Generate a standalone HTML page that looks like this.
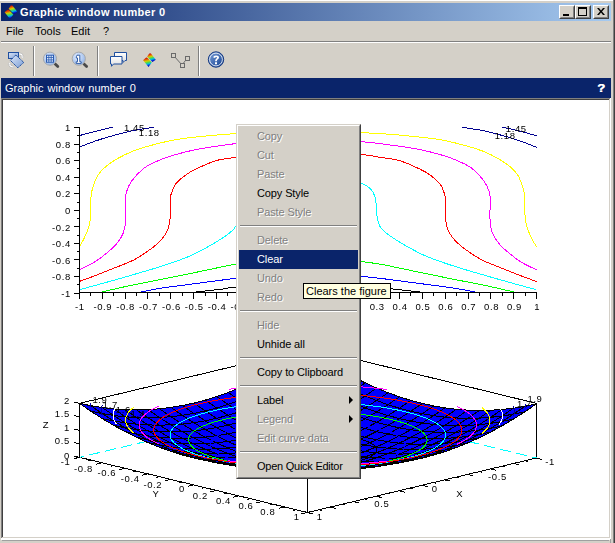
<!DOCTYPE html>
<html><head><meta charset="utf-8">
<style>
*{margin:0;padding:0;box-sizing:border-box}
html,body{width:615px;height:543px;overflow:hidden;background:#d4d0c8;font-family:"Liberation Sans",sans-serif;font-size:11px;color:#000}
.a{position:absolute}
#title{left:1px;top:3px;width:610px;height:18px;background:linear-gradient(to right,#0a246a,#a6caf0)}
#ttext{left:19px;top:2px;color:#fff;font-weight:bold;font-size:11px;line-height:14px;letter-spacing:0.35px;white-space:nowrap}
.btn{top:2px;width:16px;height:14px;background:#d4d0c8;border-style:solid;border-width:1px;border-color:#fff #404040 #404040 #fff}
.btn i{position:absolute;left:0;top:0;right:0;bottom:0;border-style:solid;border-width:1px;border-color:#d4d0c8 #808080 #808080 #d4d0c8}
.mb{top:21px;height:20px;line-height:20px;white-space:nowrap}
.menu{left:236px;top:124px;width:125px;height:355px;border:1px solid;border-color:#d4d0c8 #404040 #404040 #d4d0c8;background:#d4d0c8}
.menu>.in{position:absolute;left:0;top:0;right:0;bottom:0;border:1px solid;border-color:#fff #808080 #808080 #fff;padding:1px}
.it{position:relative;height:19px;line-height:19px;padding-left:18px;letter-spacing:-0.12px;white-space:nowrap}
.dis{color:#808080;text-shadow:1px 1px 0 #fff}
.hl{background:#0a246a;color:#fff}
.sep{position:relative;height:9px}
.sep:before{content:"";position:absolute;left:1px;right:1px;top:3px;height:1px;background:#808080}
.sep:after{content:"";position:absolute;left:1px;right:1px;top:4px;height:1px;background:#fff}
.arr{position:absolute;left:110px;top:5px;width:0;height:0;border-style:solid;border-width:4px 0 4px 4px;border-color:transparent transparent transparent #000}
</style></head><body>
<div class="a" style="left:0;top:0;width:614px;height:1px;background:#fff"></div>
<div class="a" style="left:613px;top:0;width:1px;height:543px;background:#808080"></div>
<div class="a" style="left:614px;top:0;width:1px;height:543px;background:#404040"></div>

<div id="title" class="a">
<svg class="a" style="left:0;top:0" width="20" height="18" viewBox="1 3 20 18">
<defs>
<linearGradient id="g1" gradientUnits="userSpaceOnUse" x1="11.6" y1="5.3" x2="14" y2="13.6"><stop offset="0" stop-color="#c00000"/><stop offset=".18" stop-color="#e85000"/><stop offset=".38" stop-color="#d0d000"/><stop offset=".55" stop-color="#50d850"/><stop offset=".72" stop-color="#00c0e0"/><stop offset=".9" stop-color="#0020e0"/><stop offset="1" stop-color="#0000b0"/></linearGradient>
<linearGradient id="g2" gradientUnits="userSpaceOnUse" x1="8" y1="9.6" x2="10" y2="18.6"><stop offset="0" stop-color="#c00000"/><stop offset=".18" stop-color="#e85000"/><stop offset=".38" stop-color="#d0d000"/><stop offset=".55" stop-color="#50d850"/><stop offset=".72" stop-color="#00c0e0"/><stop offset=".9" stop-color="#0020e0"/><stop offset="1" stop-color="#0000b0"/></linearGradient>
</defs>
<path d="M10.4 5.9Q11.6 4.4 12.8 5.9L17.3 11.8L14 14.1L8.6 8.7z" fill="url(#g1)"/>
<path d="M6.8 10.2Q8 8.8 9.3 10.2L13.3 14.5L10 19L4.6 12.3z" fill="url(#g2)"/>
</svg>
<div id="ttext" class="a">Graphic window number 0</div>
<div class="a btn" style="left:558px"><i></i><div class="a" style="left:3px;top:8px;width:6px;height:2px;background:#000"></div></div>
<div class="a btn" style="left:574px"><i></i><div class="a" style="left:2px;top:1px;width:9px;height:9px;border:1px solid #000;border-top-width:2px"></div></div>
<div class="a btn" style="left:592px"><i></i>
<svg class="a" style="left:3px;top:2px" width="8" height="7" viewBox="0 0 8 7"><path d="M0 0h2l2 2.5 2-2.5h2L5 3.5 8 7H6L4 4.5 2 7H0l3-3.5z" fill="#000"/></svg></div>
</div>

<div class="a mb" style="left:6px">File</div>
<div class="a mb" style="left:35px">Tools</div>
<div class="a mb" style="left:71px">Edit</div>
<div class="a mb" style="left:103px">?</div>
<div class="a" style="left:1px;top:41px;width:610px;height:1px;background:#808080"></div>
<div class="a" style="left:1px;top:42px;width:610px;height:1px;background:#fff"></div>

<!-- toolbar separators -->
<div class="a" style="left:33px;top:46px;width:1px;height:30px;background:#808080"></div>
<div class="a" style="left:34px;top:46px;width:1px;height:30px;background:#fff"></div>
<div class="a" style="left:97px;top:46px;width:1px;height:30px;background:#808080"></div>
<div class="a" style="left:98px;top:46px;width:1px;height:30px;background:#fff"></div>
<div class="a" style="left:198px;top:46px;width:1px;height:30px;background:#808080"></div>
<div class="a" style="left:199px;top:46px;width:1px;height:30px;background:#fff"></div>

<!-- toolbar icons -->
<svg class="a" style="left:0;top:43px;will-change:transform" width="240" height="35" viewBox="0 43 240 35">
<defs>
<linearGradient id="lb" x1="0" y1="0" x2="1" y2="1"><stop offset="0" stop-color="#dbe6f7"/><stop offset="1" stop-color="#7d9fd6"/></linearGradient>
<linearGradient id="hb" x1="0" y1="0" x2="1" y2="1"><stop offset="0" stop-color="#7fa3dc"/><stop offset="1" stop-color="#0e3c8c"/></linearGradient>
<radialGradient id="mg" cx=".4" cy=".35" r=".7"><stop offset="0" stop-color="#e6efff"/><stop offset="1" stop-color="#8fb2e6"/></radialGradient>
<linearGradient id="wb" x1="0" y1="0" x2="0" y2="1"><stop offset="0" stop-color="#ffffff"/><stop offset="1" stop-color="#dcdcdc"/></linearGradient>
</defs>
<!-- icon1 -->
<path d="M19 53.8Q22.3 53.8 22.3 56.6M13.5 67Q9.6 67 9.6 63.8" stroke="#b8b8b8" stroke-width="2.4" fill="none"/><path d="M19 53.8Q22.3 53.8 22.3 56.6M13.5 67Q9.6 67 9.6 63.8" stroke="#fff" stroke-width="1.2" fill="none"/><polygon points="20.6,56.2 24,56.2 22.3,58.4" fill="#fff" stroke="#b8b8b8" stroke-width=".5"/><polygon points="8,64.2 11.2,64.2 9.6,62" fill="#fff" stroke="#b8b8b8" stroke-width=".5"/>
<rect x="8.5" y="52.5" width="10" height="6" fill="url(#lb)" stroke="#1f4f9f"/>
<polygon points="15.8,55 23.8,62.4 17.8,67.8 10.4,60.4" fill="url(#lb)" stroke="#1a4a9a" stroke-width="1" stroke-dasharray="1.5,.6"/>
<!-- magnifier 1 -->
<line x1="55.2" y1="64" x2="57.8" y2="66.6" stroke="#4a4a4a" stroke-width="2.8" stroke-linecap="round"/>
<circle cx="50" cy="58.7" r="6.6" fill="url(#mg)" stroke="#a8a8a8" stroke-width="1"/>
<rect x="46.5" y="55.2" width="7" height="7" fill="#dce8fa" stroke="#2a5ab0" stroke-width="1"/><path d="M48.8 55.2v7M51.2 55.2v7M46.5 57.5h7M46.5 59.9h7" stroke="#2a5ab0" stroke-width=".8"/>
<!-- magnifier 2 -->
<line x1="84" y1="64" x2="86.6" y2="66.6" stroke="#4a4a4a" stroke-width="2.8" stroke-linecap="round"/>
<circle cx="78.8" cy="58.7" r="6.6" fill="url(#mg)" stroke="#a8a8a8" stroke-width="1"/>
<path d="M77 55.2h2.8v6.6h1.4v1.6h-5v-1.6h1.3v-3.8h-1.2v-1.2z" fill="#fff" stroke="#1f4f9f" stroke-width=".9"/>
<!-- bubbles -->
<path d="M114.5 52.5h12v8h-1.5l-2 2v-2h-8.5z" fill="url(#wb)" stroke="#1f4f9f"/>
<path d="M110.5 56.5h11.5v7.5h-8.5l-2 2.3v-2.3h-1z" fill="url(#wb)" stroke="#1f4f9f"/>
<!-- scilab -->
<g transform="translate(138.5,48)"><path d="M10.4 5.9Q11.6 4.4 12.8 5.9L17.3 11.8L14 14.1L8.6 8.7z" fill="url(#g1)"/>
<path d="M6.8 10.2Q8 8.8 9.3 10.2L13.3 14.5L10 19L4.6 12.3z" fill="url(#g2)"/></g>
<!-- nodes -->
<path d="M174 56L182 65L187 58.5" stroke="#6a6a6a" stroke-width="1" fill="none"/>
<rect x="171.5" y="53.5" width="4" height="4" fill="#d4d0c8" stroke="#6a6a6a"/>
<rect x="180.5" y="63.5" width="4" height="4" fill="#d4d0c8" stroke="#6a6a6a"/>
<rect x="185.5" y="56.5" width="4" height="4" fill="#d4d0c8" stroke="#6a6a6a"/>
<!-- help -->
<circle cx="216" cy="59.5" r="7.7" fill="url(#hb)" stroke="#173a80" stroke-width="1"/>
<circle cx="216" cy="59.5" r="6.4" fill="none" stroke="#fff" stroke-width=".8"/>
<path d="M213.3 57.6Q213.3 55.4 216.1 55.4Q219 55.4 219 57.5Q219 58.8 217.3 59.7Q216.9 60 216.9 61.2H215.1Q215.1 59.4 216.2 58.7Q217.1 58.1 217.1 57.6Q217.1 56.9 216.1 56.9Q215.2 56.9 215.1 57.9z M215 62.2h2v2h-2z" fill="#fff"/>
</svg>

<!-- docked title -->
<div class="a" style="left:1px;top:78px;width:610px;height:20px;background:#0a246a"></div>
<div class="a" style="left:5px;top:78px;height:20px;line-height:20px;color:#fff;font-size:11px;word-spacing:1px;white-space:nowrap">Graphic window number 0</div>
<div class="a" style="left:597px;top:78px;height:20px;line-height:20px;color:#fff;font-size:11px;font-weight:bold;transform:scaleX(1.2);transform-origin:0 0;text-shadow:0.4px 0 0 #fff">?</div>

<!-- canvas border -->
<div class="a" style="left:1px;top:98px;width:610px;height:1px;background:#808080"></div>
<div class="a" style="left:1px;top:98px;width:1px;height:440px;background:#808080"></div>
<div class="a" style="left:2px;top:99px;width:608px;height:1px;background:#404040"></div>
<div class="a" style="left:2px;top:99px;width:1px;height:438px;background:#404040"></div>
<div class="a" style="left:3px;top:100px;width:606px;height:437px;background:#fff"></div>
<div class="a" style="left:609px;top:99px;width:1px;height:439px;background:#d4d0c8"></div>
<div class="a" style="left:2px;top:537px;width:608px;height:1px;background:#d4d0c8"></div>
<div class="a" style="left:610px;top:98px;width:1px;height:441px;background:#fff"></div>
<div class="a" style="left:1px;top:538px;width:609px;height:2px;background:#fff"></div>
<div class="a" style="left:2px;top:540px;width:607px;height:1px;background:#a0a0a0"></div>
<div class="a" style="left:610px;top:539px;width:1px;height:4px;background:#a0a0a0"></div>

<svg width="606" height="437" viewBox="3 100 606 437" style="position:absolute;left:3px;top:100px;will-change:transform" shape-rendering="crispEdges">
<g font-family="Liberation Sans, sans-serif" font-size="9.5" letter-spacing="0.6" fill="#000">
<svg x="79" y="127" width="459" height="166" viewBox="79 127 459 166" overflow="hidden"><g><path fill="none" stroke="#00008f" d="M79 135.7C81.83 134.95 90.32 132.63 96 131.2C101.68 129.77 110.25 127.78 113.1 127.1"/><path fill="none" stroke="#00008f" d="M79 147.3C81.83 146.22 90.33 142.75 96 140.8C101.67 138.85 106.83 137.3 113 135.6C119.17 133.9 126.2 131.98 133 130.6C139.8 129.22 150.33 127.85 153.8 127.3"/><path fill="none" stroke="#ffff00" d="M79 247C79.67 245.92 81.75 242.83 83 240.5C84.25 238.17 85.5 235.42 86.5 233C87.5 230.58 88.33 228.5 89 226C89.67 223.5 90.2 221 90.5 218C90.8 215 90.75 211 90.8 208C90.85 205 90.68 202.5 90.8 200C90.92 197.5 91.1 195.28 91.5 193C91.9 190.72 92.08 189.35 93.2 186.3C94.32 183.25 95.72 178.3 98.2 174.7C100.68 171.1 103.68 168.02 108.1 164.7C112.52 161.38 119.17 157.55 124.7 154.8C130.23 152.05 133.02 150.68 141.3 148.2C149.58 145.72 163.37 141.95 174.4 139.9C185.43 137.85 197.23 136.95 207.5 135.9C217.77 134.85 227.25 134.17 236 133.6C244.75 133.03 248 132.8 260 132.5C272 132.2 300 131.92 308 131.8"/><path fill="none" stroke="#ff00ff" d="M79 269.8C81.4 268.63 88.85 265.53 93.4 262.8C97.95 260.07 102.47 256.53 106.3 253.4C110.13 250.27 113.57 247.4 116.4 244C119.23 240.6 121.77 236.83 123.3 233C124.83 229.17 125.22 226.5 125.6 221C125.98 215.5 125.47 204.83 125.6 200C125.73 195.17 125.38 195.17 126.4 192C127.42 188.83 128.77 184.97 131.7 181C134.63 177.03 139.62 171.57 144 168.2C148.38 164.83 153.33 162.9 158 160.8C162.67 158.7 165.63 157.48 172 155.6C178.37 153.72 187.53 151.23 196.2 149.5C204.87 147.77 214.27 146.5 224 145.2C233.73 143.9 240.6 142.48 254.6 141.7C268.6 140.92 299.1 140.7 308 140.5"/><path fill="none" stroke="#ff0000" d="M79 281.6C81.83 280.55 90.53 277.4 96 275.3C101.47 273.2 105.48 271.57 111.8 269C118.12 266.43 127.15 263.42 133.9 259.9C140.65 256.38 147.78 251.22 152.3 247.9C156.82 244.58 158.8 242.32 161 240C163.2 237.68 164.25 236.07 165.5 234C166.75 231.93 167.7 230.5 168.5 227.6C169.3 224.7 169.98 221.2 170.3 216.6C170.62 212 170.28 203.67 170.4 200C170.52 196.33 170.2 197.17 171 194.6C171.8 192.03 172.87 187.78 175.2 184.6C177.53 181.42 181.53 178.1 185 175.5C188.47 172.9 190.78 171.48 196 169C201.22 166.52 209.63 162.55 216.3 160.6C222.97 158.65 229.62 158.3 236 157.3C242.38 156.3 242.6 155.32 254.6 154.6C266.6 153.88 299.1 153.27 308 153"/><path fill="none" stroke="#00ffff" d="M79.5 289.7C86.25 287.83 106.48 282.37 120 278.5C133.52 274.63 148.93 270.25 160.6 266.5C172.27 262.75 181.43 259.67 190 256C198.57 252.33 205.42 248.33 212 244.5C218.58 240.67 225.5 236.08 229.5 233C233.5 229.92 234.42 229.17 236 226C237.58 222.83 238.42 217.5 239 214C239.58 210.5 239.17 208 239.5 205C239.83 202 240.08 198.67 241 196C241.92 193.33 242.73 191.17 245 189C247.27 186.83 249.6 185.33 254.6 183C259.6 180.67 271.6 176.33 275 175"/><path fill="none" stroke="#00ff00" d="M101.7 292C106.42 290.93 119.47 287.82 130 285.6C140.53 283.38 153.23 281.05 164.9 278.7C176.57 276.35 188.15 273.93 200 271.5C211.85 269.07 226 265.85 236 264.1C246 262.35 248 262.02 260 261C272 259.98 300 258.5 308 258"/><path fill="none" stroke="#0000ff" d="M141 292C144.58 291.33 152.67 289.5 162.5 288C172.33 286.5 187.75 284.62 200 283C212.25 281.38 226 279.47 236 278.3C246 277.13 248 276.88 260 276C272 275.12 300 273.5 308 273"/><path fill="none" stroke="#000000" d="M196 292C200.67 291.48 217.33 289.68 224 288.9C230.67 288.12 222 288.12 236 287.3C250 286.48 296 284.55 308 284"/></g><g transform="translate(615.7,0) scale(-1,1)"><path fill="none" stroke="#00008f" d="M79 135.7C81.83 134.95 90.32 132.63 96 131.2C101.68 129.77 110.25 127.78 113.1 127.1"/><path fill="none" stroke="#00008f" d="M79 147.3C81.83 146.22 90.33 142.75 96 140.8C101.67 138.85 106.83 137.3 113 135.6C119.17 133.9 126.2 131.98 133 130.6C139.8 129.22 150.33 127.85 153.8 127.3"/><path fill="none" stroke="#ffff00" d="M79 247C79.67 245.92 81.75 242.83 83 240.5C84.25 238.17 85.5 235.42 86.5 233C87.5 230.58 88.33 228.5 89 226C89.67 223.5 90.2 221 90.5 218C90.8 215 90.75 211 90.8 208C90.85 205 90.68 202.5 90.8 200C90.92 197.5 91.1 195.28 91.5 193C91.9 190.72 92.08 189.35 93.2 186.3C94.32 183.25 95.72 178.3 98.2 174.7C100.68 171.1 103.68 168.02 108.1 164.7C112.52 161.38 119.17 157.55 124.7 154.8C130.23 152.05 133.02 150.68 141.3 148.2C149.58 145.72 163.37 141.95 174.4 139.9C185.43 137.85 197.23 136.95 207.5 135.9C217.77 134.85 227.25 134.17 236 133.6C244.75 133.03 248 132.8 260 132.5C272 132.2 300 131.92 308 131.8"/><path fill="none" stroke="#ff00ff" d="M79 269.8C81.4 268.63 88.85 265.53 93.4 262.8C97.95 260.07 102.47 256.53 106.3 253.4C110.13 250.27 113.57 247.4 116.4 244C119.23 240.6 121.77 236.83 123.3 233C124.83 229.17 125.22 226.5 125.6 221C125.98 215.5 125.47 204.83 125.6 200C125.73 195.17 125.38 195.17 126.4 192C127.42 188.83 128.77 184.97 131.7 181C134.63 177.03 139.62 171.57 144 168.2C148.38 164.83 153.33 162.9 158 160.8C162.67 158.7 165.63 157.48 172 155.6C178.37 153.72 187.53 151.23 196.2 149.5C204.87 147.77 214.27 146.5 224 145.2C233.73 143.9 240.6 142.48 254.6 141.7C268.6 140.92 299.1 140.7 308 140.5"/><path fill="none" stroke="#ff0000" d="M79 281.6C81.83 280.55 90.53 277.4 96 275.3C101.47 273.2 105.48 271.57 111.8 269C118.12 266.43 127.15 263.42 133.9 259.9C140.65 256.38 147.78 251.22 152.3 247.9C156.82 244.58 158.8 242.32 161 240C163.2 237.68 164.25 236.07 165.5 234C166.75 231.93 167.7 230.5 168.5 227.6C169.3 224.7 169.98 221.2 170.3 216.6C170.62 212 170.28 203.67 170.4 200C170.52 196.33 170.2 197.17 171 194.6C171.8 192.03 172.87 187.78 175.2 184.6C177.53 181.42 181.53 178.1 185 175.5C188.47 172.9 190.78 171.48 196 169C201.22 166.52 209.63 162.55 216.3 160.6C222.97 158.65 229.62 158.3 236 157.3C242.38 156.3 242.6 155.32 254.6 154.6C266.6 153.88 299.1 153.27 308 153"/><path fill="none" stroke="#00ffff" d="M79.5 289.7C86.25 287.83 106.48 282.37 120 278.5C133.52 274.63 148.93 270.25 160.6 266.5C172.27 262.75 181.43 259.67 190 256C198.57 252.33 205.42 248.33 212 244.5C218.58 240.67 225.5 236.08 229.5 233C233.5 229.92 234.42 229.17 236 226C237.58 222.83 238.42 217.5 239 214C239.58 210.5 239.17 208 239.5 205C239.83 202 240.08 198.67 241 196C241.92 193.33 242.73 191.17 245 189C247.27 186.83 249.6 185.33 254.6 183C259.6 180.67 271.6 176.33 275 175"/><path fill="none" stroke="#00ff00" d="M101.7 292C106.42 290.93 119.47 287.82 130 285.6C140.53 283.38 153.23 281.05 164.9 278.7C176.57 276.35 188.15 273.93 200 271.5C211.85 269.07 226 265.85 236 264.1C246 262.35 248 262.02 260 261C272 259.98 300 258.5 308 258"/><path fill="none" stroke="#0000ff" d="M141 292C144.58 291.33 152.67 289.5 162.5 288C172.33 286.5 187.75 284.62 200 283C212.25 281.38 226 279.47 236 278.3C246 277.13 248 276.88 260 276C272 275.12 300 273.5 308 273"/><path fill="none" stroke="#000000" d="M196 292C200.67 291.48 217.33 289.68 224 288.9C230.67 288.12 222 288.12 236 287.3C250 286.48 296 284.55 308 284"/></g></svg>
<path d="M79 292.5H537 M79.5 292.5V127.5" stroke="#000" fill="none"/><path d="M79.5 292.5V298.5" stroke="#000"/><text x="79.9" y="309.5" text-anchor="middle">-1</text><path d="M90.5 292.5V295.5" stroke="#000"/><path d="M102.5 292.5V298.5" stroke="#000"/><text x="102.8" y="309.5" text-anchor="middle">-0.9</text><path d="M113.5 292.5V295.5" stroke="#000"/><path d="M125.5 292.5V298.5" stroke="#000"/><text x="125.6" y="309.5" text-anchor="middle">-0.8</text><path d="M136.5 292.5V295.5" stroke="#000"/><path d="M147.5 292.5V298.5" stroke="#000"/><text x="148.5" y="309.5" text-anchor="middle">-0.7</text><path d="M159.5 292.5V295.5" stroke="#000"/><path d="M170.5 292.5V298.5" stroke="#000"/><text x="171.4" y="309.5" text-anchor="middle">-0.6</text><path d="M182.5 292.5V295.5" stroke="#000"/><path d="M193.5 292.5V298.5" stroke="#000"/><text x="194.2" y="309.5" text-anchor="middle">-0.5</text><path d="M205.5 292.5V295.5" stroke="#000"/><path d="M216.5 292.5V298.5" stroke="#000"/><text x="217.1" y="309.5" text-anchor="middle">-0.4</text><path d="M227.5 292.5V295.5" stroke="#000"/><path d="M239.5 292.5V298.5" stroke="#000"/><text x="240.0" y="309.5" text-anchor="middle">-0.3</text><path d="M250.5 292.5V295.5" stroke="#000"/><path d="M262.5 292.5V298.5" stroke="#000"/><text x="262.9" y="309.5" text-anchor="middle">-0.2</text><path d="M273.5 292.5V295.5" stroke="#000"/><path d="M285.5 292.5V298.5" stroke="#000"/><text x="285.7" y="309.5" text-anchor="middle">-0.1</text><path d="M296.5 292.5V295.5" stroke="#000"/><path d="M308.5 292.5V298.5" stroke="#000"/><text x="308.6" y="309.5" text-anchor="middle">0</text><path d="M319.5 292.5V295.5" stroke="#000"/><path d="M330.5 292.5V298.5" stroke="#000"/><text x="331.5" y="309.5" text-anchor="middle">0.1</text><path d="M342.5 292.5V295.5" stroke="#000"/><path d="M353.5 292.5V298.5" stroke="#000"/><text x="354.3" y="309.5" text-anchor="middle">0.2</text><path d="M365.5 292.5V295.5" stroke="#000"/><path d="M376.5 292.5V298.5" stroke="#000"/><text x="377.2" y="309.5" text-anchor="middle">0.3</text><path d="M388.5 292.5V295.5" stroke="#000"/><path d="M399.5 292.5V298.5" stroke="#000"/><text x="400.1" y="309.5" text-anchor="middle">0.4</text><path d="M410.5 292.5V295.5" stroke="#000"/><path d="M422.5 292.5V298.5" stroke="#000"/><text x="422.9" y="309.5" text-anchor="middle">0.5</text><path d="M433.5 292.5V295.5" stroke="#000"/><path d="M445.5 292.5V298.5" stroke="#000"/><text x="445.8" y="309.5" text-anchor="middle">0.6</text><path d="M456.5 292.5V295.5" stroke="#000"/><path d="M468.5 292.5V298.5" stroke="#000"/><text x="468.7" y="309.5" text-anchor="middle">0.7</text><path d="M479.5 292.5V295.5" stroke="#000"/><path d="M490.5 292.5V298.5" stroke="#000"/><text x="491.6" y="309.5" text-anchor="middle">0.8</text><path d="M502.5 292.5V295.5" stroke="#000"/><path d="M513.5 292.5V298.5" stroke="#000"/><text x="514.4" y="309.5" text-anchor="middle">0.9</text><path d="M525.5 292.5V295.5" stroke="#000"/><path d="M536.5 292.5V298.5" stroke="#000"/><text x="537.3" y="309.5" text-anchor="middle">1</text><path d="M79.5 293.5H73.5" stroke="#000"/><text x="70.8" y="296.7" text-anchor="end">-1</text><path d="M79.5 284.5H76.5" stroke="#000"/><path d="M79.5 276.5H73.5" stroke="#000"/><text x="70.8" y="280.2" text-anchor="end">-0.8</text><path d="M79.5 268.5H76.5" stroke="#000"/><path d="M79.5 259.5H73.5" stroke="#000"/><text x="70.8" y="263.6" text-anchor="end">-0.6</text><path d="M79.5 251.5H76.5" stroke="#000"/><path d="M79.5 243.5H73.5" stroke="#000"/><text x="70.8" y="247.0" text-anchor="end">-0.4</text><path d="M79.5 235.5H76.5" stroke="#000"/><path d="M79.5 226.5H73.5" stroke="#000"/><text x="70.8" y="230.5" text-anchor="end">-0.2</text><path d="M79.5 218.5H76.5" stroke="#000"/><path d="M79.5 210.5H73.5" stroke="#000"/><text x="70.8" y="213.9" text-anchor="end">0</text><path d="M79.5 202.5H76.5" stroke="#000"/><path d="M79.5 193.5H73.5" stroke="#000"/><text x="70.8" y="197.4" text-anchor="end">0.2</text><path d="M79.5 185.5H76.5" stroke="#000"/><path d="M79.5 177.5H73.5" stroke="#000"/><text x="70.8" y="180.8" text-anchor="end">0.4</text><path d="M79.5 168.5H76.5" stroke="#000"/><path d="M79.5 160.5H73.5" stroke="#000"/><text x="70.8" y="164.3" text-anchor="end">0.6</text><path d="M79.5 152.5H76.5" stroke="#000"/><path d="M79.5 144.5H73.5" stroke="#000"/><text x="70.8" y="147.7" text-anchor="end">0.8</text><path d="M79.5 135.5H76.5" stroke="#000"/><path d="M79.5 127.5H73.5" stroke="#000"/><text x="70.8" y="131.2" text-anchor="end">1</text>
<text x="123.9" y="130.8">1.45</text><text x="138.8" y="136">1.18</text>
<text x="505.8" y="132">1.45</text><text x="494.7" y="139.4">1.18</text>
<polyline fill="none" stroke="#000" points="79.5,403.4 309.8,348.0 536.5,403.4"/><path d="M79.5 403.4V457.5 M536.5 403.4V458.3 M307.5 458V512.5" stroke="#000" fill="none"/><polyline fill="none" stroke="#000" points="79.5,457.3 307.5,512.5 536.5,458.0"/><path fill="none" stroke="#00ffff" stroke-dasharray="11.2,5.2" stroke-dashoffset="6.8" d="M79.5 457.3L308.3 402.8M536.5 458.0L308.3 402.8"/>
<g fill="#0000ff" stroke="#000" stroke-width="1" stroke-linejoin="round"><polygon points="308.3,348.8 296.86,356.65 308.25,364.54 319.69,356.69"/><polygon points="319.69,356.69 308.25,364.54 319.64,371.89 331.09,364.04"/><polygon points="296.86,356.65 285.41,363.97 296.81,371.86 308.25,364.54"/><polygon points="308.25,364.54 296.81,371.86 308.2,379.21 319.64,371.89"/><polygon points="331.09,364.04 319.64,371.89 331.04,378.7 342.49,370.85"/><polygon points="285.41,363.97 273.97,370.74 285.36,378.63 296.81,371.86"/><polygon points="319.64,371.89 308.2,379.21 319.6,386.02 331.04,378.7"/><polygon points="296.81,371.86 285.36,378.63 296.75,385.99 308.2,379.21"/><polygon points="342.49,370.85 331.04,378.7 342.44,384.98 353.88,377.12"/><polygon points="273.97,370.74 262.52,376.98 273.92,384.87 285.36,378.63"/><polygon points="353.88,377.12 342.44,384.98 353.83,390.7 365.27,382.85"/><polygon points="331.04,378.7 319.6,386.02 330.99,392.29 342.44,384.98"/><polygon points="308.2,379.21 296.75,385.99 308.15,392.8 319.6,386.02"/><polygon points="285.36,378.63 273.92,384.87 285.31,392.22 296.75,385.99"/><polygon points="262.52,376.98 251.08,382.67 262.47,390.56 273.92,384.87"/><polygon points="342.44,384.98 330.99,392.29 342.38,398.02 353.83,390.7"/><polygon points="273.92,384.87 262.47,390.56 273.87,397.91 285.31,392.22"/><polygon points="365.27,382.85 353.83,390.7 365.23,395.89 376.67,388.04"/><polygon points="319.6,386.02 308.15,392.8 319.55,399.06 330.99,392.29"/><polygon points="296.75,385.99 285.31,392.22 296.71,399.03 308.15,392.8"/><polygon points="251.08,382.67 239.63,387.83 251.03,395.72 262.47,390.56"/><polygon points="376.67,388.04 365.23,395.89 376.62,400.55 388.06,392.69"/><polygon points="353.83,390.7 342.38,398.02 353.78,403.21 365.23,395.89"/><polygon points="330.99,392.29 319.55,399.06 330.94,404.79 342.38,398.02"/><polygon points="285.31,392.22 273.87,397.91 285.26,404.72 296.71,399.03"/><polygon points="262.47,390.56 251.03,395.72 262.42,403.07 273.87,397.91"/><polygon points="239.63,387.83 228.19,392.44 239.58,400.33 251.03,395.72"/><polygon points="308.15,392.8 296.71,399.03 308.1,405.3 319.55,399.06"/><polygon points="365.23,395.89 353.78,403.21 365.18,407.86 376.62,400.55"/><polygon points="251.03,395.72 239.58,400.33 250.97,407.69 262.42,403.07"/><polygon points="388.06,392.69 376.62,400.55 388.01,404.66 399.46,396.8"/><polygon points="342.38,398.02 330.94,404.79 342.34,409.98 353.78,403.21"/><polygon points="319.55,399.06 308.1,405.3 319.5,411.03 330.94,404.79"/><polygon points="296.71,399.03 285.26,404.72 296.66,411 308.1,405.3"/><polygon points="273.87,397.91 262.42,403.07 273.82,409.88 285.26,404.72"/><polygon points="228.19,392.44 216.74,396.52 228.13,404.41 239.58,400.33"/><polygon points="376.62,400.55 365.18,407.86 376.57,411.97 388.01,404.66"/><polygon points="353.78,403.21 342.34,409.98 353.73,414.63 365.18,407.86"/><polygon points="308.1,405.3 296.66,411 308.05,416.72 319.5,411.03"/><polygon points="262.42,403.07 250.97,407.69 262.37,414.49 273.82,409.88"/><polygon points="239.58,400.33 228.13,404.41 239.53,411.76 250.97,407.69"/><polygon points="399.46,396.8 388.01,404.66 399.41,408.23 410.86,400.37"/><polygon points="330.94,404.79 319.5,411.03 330.89,416.22 342.34,409.98"/><polygon points="285.26,404.72 273.82,409.88 285.21,416.15 296.66,411"/><polygon points="216.74,396.52 205.3,400.05 216.69,407.94 228.13,404.41"/><polygon points="410.86,400.37 399.41,408.23 410.81,411.25 422.25,403.4"/><polygon points="388.01,404.66 376.57,411.97 387.97,415.54 399.41,408.23"/><polygon points="365.18,407.86 353.73,414.63 365.12,418.75 376.57,411.97"/><polygon points="342.34,409.98 330.89,416.22 342.29,420.87 353.73,414.63"/><polygon points="319.5,411.03 308.05,416.72 319.45,421.91 330.89,416.22"/><polygon points="296.66,411 285.21,416.15 296.61,421.88 308.05,416.72"/><polygon points="273.82,409.88 262.37,414.49 273.76,420.76 285.21,416.15"/><polygon points="250.97,407.69 239.53,411.76 250.93,418.57 262.37,414.49"/><polygon points="228.13,404.41 216.69,407.94 228.08,415.29 239.53,411.76"/><polygon points="205.3,400.05 193.85,403.05 205.25,410.94 216.69,407.94"/><polygon points="399.41,408.23 387.97,415.54 399.36,418.57 410.81,411.25"/><polygon points="330.89,416.22 319.45,421.91 330.84,426.56 342.29,420.87"/><polygon points="285.21,416.15 273.76,420.76 285.16,426.49 296.61,421.88"/><polygon points="216.69,407.94 205.25,410.94 216.64,418.29 228.08,415.29"/><polygon points="308.05,416.72 296.61,421.88 308,427.07 319.45,421.91"/><polygon points="422.25,403.4 410.81,411.25 422.2,413.75 433.64,405.89"/><polygon points="376.57,411.97 365.12,418.75 376.52,422.31 387.97,415.54"/><polygon points="353.73,414.63 342.29,420.87 353.68,424.98 365.12,418.75"/><polygon points="262.37,414.49 250.93,418.57 262.32,424.84 273.76,420.76"/><polygon points="239.53,411.76 228.08,415.29 239.48,422.1 250.93,418.57"/><polygon points="193.85,403.05 182.41,405.5 193.8,413.39 205.25,410.94"/><polygon points="410.81,411.25 399.36,418.57 410.75,421.06 422.2,413.75"/><polygon points="387.97,415.54 376.52,422.31 387.92,425.34 399.36,418.57"/><polygon points="342.29,420.87 330.84,426.56 342.24,430.68 353.68,424.98"/><polygon points="319.45,421.91 308,427.07 319.4,431.72 330.84,426.56"/><polygon points="296.61,421.88 285.16,426.49 296.56,431.68 308,427.07"/><polygon points="273.76,420.76 262.32,424.84 273.71,430.57 285.16,426.49"/><polygon points="228.08,415.29 216.64,418.29 228.04,425.1 239.48,422.1"/><polygon points="205.25,410.94 193.8,413.39 205.19,420.75 216.64,418.29"/><polygon points="433.64,405.89 422.2,413.75 433.6,415.69 445.04,407.84"/><polygon points="182.41,405.5 170.96,407.42 182.36,415.31 193.8,413.39"/><polygon points="365.12,418.75 353.68,424.98 365.08,428.55 376.52,422.31"/><polygon points="250.93,418.57 239.48,422.1 250.88,428.37 262.32,424.84"/><polygon points="422.2,413.75 410.75,421.06 422.15,423.01 433.6,415.69"/><polygon points="308,427.07 296.56,431.68 307.95,436.33 319.4,431.72"/><polygon points="193.8,413.39 182.36,415.31 193.75,422.66 205.19,420.75"/><polygon points="445.04,407.84 433.6,415.69 444.99,417.1 456.44,409.25"/><polygon points="399.36,418.57 387.92,425.34 399.31,427.83 410.75,421.06"/><polygon points="376.52,422.31 365.08,428.55 376.47,431.58 387.92,425.34"/><polygon points="353.68,424.98 342.24,430.68 353.63,434.25 365.08,428.55"/><polygon points="330.84,426.56 319.4,431.72 330.79,435.83 342.24,430.68"/><polygon points="285.16,426.49 273.71,430.57 285.11,435.76 296.56,431.68"/><polygon points="262.32,424.84 250.88,428.37 262.27,434.1 273.71,430.57"/><polygon points="239.48,422.1 228.04,425.1 239.43,431.37 250.88,428.37"/><polygon points="216.64,418.29 205.19,420.75 216.59,427.56 228.04,425.1"/><polygon points="170.96,407.42 159.52,408.79 170.91,416.69 182.36,415.31"/><polygon points="433.6,415.69 422.15,423.01 433.55,424.42 444.99,417.1"/><polygon points="365.08,428.55 353.63,434.25 365.03,437.27 376.47,431.58"/><polygon points="319.4,431.72 307.95,436.33 319.34,440.44 330.79,435.83"/><polygon points="296.56,431.68 285.11,435.76 296.5,440.41 307.95,436.33"/><polygon points="250.88,428.37 239.43,431.37 250.83,437.1 262.27,434.1"/><polygon points="182.36,415.31 170.91,416.69 182.31,424.04 193.75,422.66"/><polygon points="456.44,409.25 444.99,417.1 456.38,417.98 467.83,410.12"/><polygon points="410.75,421.06 399.31,427.83 410.71,429.78 422.15,423.01"/><polygon points="342.24,430.68 330.79,435.83 342.19,439.4 353.63,434.25"/><polygon points="273.71,430.57 262.27,434.1 273.67,439.29 285.11,435.76"/><polygon points="205.19,420.75 193.75,422.66 205.15,429.47 216.59,427.56"/><polygon points="159.52,408.79 148.07,409.63 159.47,417.52 170.91,416.69"/><polygon points="387.92,425.34 376.47,431.58 387.87,434.07 399.31,427.83"/><polygon points="228.04,425.1 216.59,427.56 227.99,433.82 239.43,431.37"/><polygon points="444.99,417.1 433.55,424.42 444.94,425.29 456.38,417.98"/><polygon points="170.91,416.69 159.47,417.52 170.86,424.87 182.31,424.04"/><polygon points="467.83,410.12 456.38,417.98 467.78,418.31 479.23,410.45"/><polygon points="422.15,423.01 410.71,429.78 422.1,431.19 433.55,424.42"/><polygon points="376.47,431.58 365.03,437.27 376.42,439.76 387.87,434.07"/><polygon points="353.63,434.25 342.19,439.4 353.58,442.43 365.03,437.27"/><polygon points="330.79,435.83 319.34,440.44 330.74,444.01 342.19,439.4"/><polygon points="307.95,436.33 296.5,440.41 307.9,444.52 319.34,440.44"/><polygon points="285.11,435.76 273.67,439.29 285.06,443.94 296.5,440.41"/><polygon points="262.27,434.1 250.83,437.1 262.22,442.29 273.67,439.29"/><polygon points="239.43,431.37 227.99,433.82 239.38,439.56 250.83,437.1"/><polygon points="193.75,422.66 182.31,424.04 193.7,430.84 205.15,429.47"/><polygon points="148.07,409.63 136.62,409.92 148.02,417.81 159.47,417.52"/><polygon points="399.31,427.83 387.87,434.07 399.26,436.02 410.71,429.78"/><polygon points="216.59,427.56 205.15,429.47 216.54,435.74 227.99,433.82"/><polygon points="456.38,417.98 444.94,425.29 456.34,425.62 467.78,418.31"/><polygon points="159.47,417.52 148.02,417.81 159.42,425.16 170.86,424.87"/><polygon points="433.55,424.42 422.1,431.19 433.5,432.06 444.94,425.29"/><polygon points="387.87,434.07 376.42,439.76 387.82,441.71 399.26,436.02"/><polygon points="342.19,439.4 330.74,444.01 342.13,447.04 353.58,442.43"/><polygon points="273.67,439.29 262.22,442.29 273.62,446.94 285.06,443.94"/><polygon points="227.99,433.82 216.54,435.74 227.94,441.47 239.38,439.56"/><polygon points="182.31,424.04 170.86,424.87 182.26,431.68 193.7,430.84"/><polygon points="365.03,437.27 353.58,442.43 364.98,444.92 376.42,439.76"/><polygon points="319.34,440.44 307.9,444.52 319.3,448.09 330.74,444.01"/><polygon points="296.5,440.41 285.06,443.94 296.45,448.05 307.9,444.52"/><polygon points="250.83,437.1 239.38,439.56 250.78,444.75 262.22,442.29"/><polygon points="479.23,410.45 467.78,418.31 479.18,418.1 490.62,410.24"/><polygon points="410.71,429.78 399.26,436.02 410.66,437.43 422.1,431.19"/><polygon points="205.15,429.47 193.7,430.84 205.1,437.12 216.54,435.74"/><polygon points="136.62,409.92 125.18,409.68 136.57,417.57 148.02,417.81"/><polygon points="467.78,418.31 456.34,425.62 467.73,425.41 479.18,418.1"/><polygon points="444.94,425.29 433.5,432.06 444.89,432.39 456.34,425.62"/><polygon points="399.26,436.02 387.82,441.71 399.21,443.12 410.66,437.43"/><polygon points="216.54,435.74 205.1,437.12 216.49,442.84 227.94,441.47"/><polygon points="170.86,424.87 159.42,425.16 170.81,431.97 182.26,431.68"/><polygon points="148.02,417.81 136.57,417.57 147.97,424.92 159.42,425.16"/><polygon points="376.42,439.76 364.98,444.92 376.37,446.87 387.82,441.71"/><polygon points="353.58,442.43 342.13,447.04 353.53,449.53 364.98,444.92"/><polygon points="330.74,444.01 319.3,448.09 330.69,451.12 342.13,447.04"/><polygon points="285.06,443.94 273.62,446.94 285.01,451.05 296.45,448.05"/><polygon points="262.22,442.29 250.78,444.75 262.17,449.4 273.62,446.94"/><polygon points="239.38,439.56 227.94,441.47 239.33,446.66 250.78,444.75"/><polygon points="490.62,410.24 479.18,418.1 490.57,417.34 502.01,409.49"/><polygon points="422.1,431.19 410.66,437.43 422.05,438.3 433.5,432.06"/><polygon points="307.9,444.52 296.45,448.05 307.85,451.62 319.3,448.09"/><polygon points="193.7,430.84 182.26,431.68 193.65,437.95 205.1,437.12"/><polygon points="125.18,409.68 113.73,408.89 125.13,416.78 136.57,417.57"/><polygon points="479.18,418.1 467.73,425.41 479.12,424.66 490.57,417.34"/><polygon points="410.66,437.43 399.21,443.12 410.61,444 422.05,438.3"/><polygon points="205.1,437.12 193.65,437.95 205.05,443.68 216.49,442.84"/><polygon points="136.57,417.57 125.13,416.78 136.52,424.13 147.97,424.92"/><polygon points="387.82,441.71 376.37,446.87 387.77,448.28 399.21,443.12"/><polygon points="364.98,444.92 353.53,449.53 364.93,451.48 376.37,446.87"/><polygon points="250.78,444.75 239.33,446.66 250.73,451.31 262.17,449.4"/><polygon points="227.94,441.47 216.49,442.84 227.89,448.03 239.33,446.66"/><text x="102.8" y="408.3" fill="#000" stroke="none">1.7</text><text x="517.0" y="406.8" fill="#000" stroke="none">1.7</text><polygon points="502.01,409.49 490.57,417.34 501.97,416.05 513.41,408.2"/><polygon points="456.34,425.62 444.89,432.39 456.29,432.19 467.73,425.41"/><polygon points="433.5,432.06 422.05,438.3 433.45,438.63 444.89,432.39"/><polygon points="342.13,447.04 330.69,451.12 342.09,453.61 353.53,449.53"/><polygon points="319.3,448.09 307.85,451.62 319.25,454.65 330.69,451.12"/><polygon points="296.45,448.05 285.01,451.05 296.41,454.62 307.85,451.62"/><polygon points="273.62,446.94 262.17,449.4 273.56,453.5 285.01,451.05"/><polygon points="182.26,431.68 170.81,431.97 182.21,438.25 193.65,437.95"/><polygon points="159.42,425.16 147.97,424.92 159.37,431.73 170.81,431.97"/><polygon points="113.73,408.89 102.29,407.57 113.69,415.46 125.13,416.78"/><polygon points="490.57,417.34 479.12,424.66 490.52,423.37 501.97,416.05"/><polygon points="422.05,438.3 410.61,444 422,444.32 433.45,438.63"/><polygon points="193.65,437.95 182.21,438.25 193.6,443.97 205.05,443.68"/><polygon points="125.13,416.78 113.69,415.46 125.08,422.81 136.52,424.13"/><polygon points="399.21,443.12 387.77,448.28 399.16,449.15 410.61,444"/><polygon points="376.37,446.87 364.93,451.48 376.32,452.89 387.77,448.28"/><polygon points="239.33,446.66 227.89,448.03 239.28,452.68 250.73,451.31"/><polygon points="216.49,442.84 205.05,443.68 216.44,448.87 227.89,448.03"/><polygon points="513.41,408.2 501.97,416.05 513.36,414.22 524.8,406.37"/><polygon points="467.73,425.41 456.29,432.19 467.68,431.44 479.12,424.66"/><polygon points="353.53,449.53 342.09,453.61 353.48,455.56 364.93,451.48"/><polygon points="307.85,451.62 296.41,454.62 307.8,457.65 319.25,454.65"/><polygon points="262.17,449.4 250.73,451.31 262.12,455.42 273.56,453.5"/><polygon points="147.97,424.92 136.52,424.13 147.92,430.94 159.37,431.73"/><polygon points="102.29,407.57 90.85,405.7 102.24,413.59 113.69,415.46"/><polygon points="330.69,451.12 319.25,454.65 330.64,457.14 342.09,453.61"/><polygon points="285.01,451.05 273.56,453.5 284.96,457.07 296.41,454.62"/><polygon points="444.89,432.39 433.45,438.63 444.84,438.42 456.29,432.19"/><polygon points="170.81,431.97 159.37,431.73 170.76,438 182.21,438.25"/><text x="92.4" y="403.0" fill="#000" stroke="none">1.9</text><text x="527.5" y="402.4" fill="#000" stroke="none">1.9</text><polygon points="501.97,416.05 490.52,423.37 501.92,421.54 513.36,414.22"/><polygon points="113.69,415.46 102.24,413.59 113.64,420.94 125.08,422.81"/><polygon points="410.61,444 399.16,449.15 410.56,449.48 422,444.32"/><polygon points="387.77,448.28 376.32,452.89 387.71,453.76 399.16,449.15"/><polygon points="227.89,448.03 216.44,448.87 227.84,453.52 239.28,452.68"/><polygon points="205.05,443.68 193.6,443.97 205,449.16 216.44,448.87"/><polygon points="524.8,406.37 513.36,414.22 524.75,411.86 536.2,404"/><polygon points="479.12,424.66 467.68,431.44 479.08,430.14 490.52,423.37"/><polygon points="433.45,438.63 422,444.32 433.4,444.11 444.84,438.42"/><polygon points="364.93,451.48 353.48,455.56 364.88,456.97 376.32,452.89"/><polygon points="250.73,451.31 239.28,452.68 250.68,456.8 262.12,455.42"/><polygon points="182.21,438.25 170.76,438 182.16,443.73 193.6,443.97"/><polygon points="136.52,424.13 125.08,422.81 136.48,429.62 147.92,430.94"/><polygon points="90.85,405.7 79.4,403.3 90.8,411.19 102.24,413.59"/><polygon points="342.09,453.61 330.64,457.14 342.04,459.09 353.48,455.56"/><polygon points="319.25,454.65 307.8,457.65 319.2,460.14 330.64,457.14"/><polygon points="296.41,454.62 284.96,457.07 296.36,460.11 307.8,457.65"/><polygon points="273.56,453.5 262.12,455.42 273.52,458.99 284.96,457.07"/><polygon points="456.29,432.19 444.84,438.42 456.24,437.67 467.68,431.44"/><polygon points="159.37,431.73 147.92,430.94 159.31,437.21 170.76,438"/><polygon points="513.36,414.22 501.92,421.54 513.31,419.17 524.75,411.86"/><polygon points="102.24,413.59 90.8,411.19 102.19,418.54 113.64,420.94"/><polygon points="399.16,449.15 387.71,453.76 399.11,454.09 410.56,449.48"/><polygon points="216.44,448.87 205,449.16 216.39,453.81 227.84,453.52"/><polygon points="490.52,423.37 479.08,430.14 490.47,428.31 501.92,421.54"/><polygon points="444.84,438.42 433.4,444.11 444.79,443.36 456.24,437.67"/><polygon points="376.32,452.89 364.88,456.97 376.27,457.84 387.71,453.76"/><polygon points="239.28,452.68 227.84,453.52 239.23,457.63 250.68,456.8"/><polygon points="170.76,438 159.31,437.21 170.71,442.94 182.16,443.73"/><polygon points="125.08,422.81 113.64,420.94 125.03,427.75 136.48,429.62"/><text x="115.8" y="412.8" fill="#000" stroke="none">1.6</text><text x="130.5" y="417.2" fill="#000" stroke="none">1.4</text><polygon points="422,444.32 410.56,449.48 421.95,449.27 433.4,444.11"/><polygon points="353.48,455.56 342.04,459.09 353.43,460.5 364.88,456.97"/><polygon points="330.64,457.14 319.2,460.14 330.59,462.09 342.04,459.09"/><polygon points="284.96,457.07 273.52,458.99 284.91,462.02 296.36,460.11"/><polygon points="262.12,455.42 250.68,456.8 262.07,460.37 273.52,458.99"/><polygon points="193.6,443.97 182.16,443.73 193.55,448.92 205,449.16"/><polygon points="467.68,431.44 456.24,437.67 467.63,436.38 479.08,430.14"/><polygon points="307.8,457.65 296.36,460.11 307.75,462.59 319.2,460.14"/><polygon points="147.92,430.94 136.48,429.62 147.87,435.89 159.31,437.21"/><polygon points="501.92,421.54 490.47,428.31 501.87,425.94 513.31,419.17"/><polygon points="456.24,437.67 444.79,443.36 456.19,442.07 467.63,436.38"/><polygon points="387.71,453.76 376.27,457.84 387.67,458.17 399.11,454.09"/><polygon points="227.84,453.52 216.39,453.81 227.79,457.93 239.23,457.63"/><polygon points="159.31,437.21 147.87,435.89 159.27,441.62 170.71,442.94"/><polygon points="113.64,420.94 102.19,418.54 113.59,425.35 125.03,427.75"/><polygon points="433.4,444.11 421.95,449.27 433.35,448.52 444.79,443.36"/><polygon points="410.56,449.48 399.11,454.09 410.5,453.88 421.95,449.27"/><polygon points="364.88,456.97 353.43,460.5 364.82,461.38 376.27,457.84"/><polygon points="342.04,459.09 330.59,462.09 341.99,463.5 353.43,460.5"/><polygon points="273.52,458.99 262.07,460.37 273.47,463.39 284.91,462.02"/><polygon points="250.68,456.8 239.23,457.63 250.63,461.2 262.07,460.37"/><polygon points="205,449.16 193.55,448.92 204.94,453.57 216.39,453.81"/><polygon points="182.16,443.73 170.71,442.94 182.1,448.13 193.55,448.92"/><polygon points="479.08,430.14 467.63,436.38 479.03,434.55 490.47,428.31"/><polygon points="319.2,460.14 307.75,462.59 319.15,464.54 330.59,462.09"/><polygon points="296.36,460.11 284.91,462.02 296.31,464.51 307.75,462.59"/><polygon points="136.48,429.62 125.03,427.75 136.43,434.02 147.87,435.89"/><polygon points="467.63,436.38 456.19,442.07 467.58,440.24 479.03,434.55"/><polygon points="147.87,435.89 136.43,434.02 147.82,439.75 159.27,441.62"/><polygon points="444.79,443.36 433.35,448.52 444.74,447.23 456.19,442.07"/><polygon points="421.95,449.27 410.5,453.88 421.9,453.13 433.35,448.52"/><polygon points="376.27,457.84 364.82,461.38 376.22,461.7 387.67,458.17"/><polygon points="353.43,460.5 341.99,463.5 353.38,464.37 364.82,461.38"/><polygon points="262.07,460.37 250.63,461.2 262.02,464.23 273.47,463.39"/><polygon points="239.23,457.63 227.79,457.93 239.18,461.5 250.63,461.2"/><polygon points="193.55,448.92 182.1,448.13 193.5,452.78 204.94,453.57"/><polygon points="170.71,442.94 159.27,441.62 170.66,446.81 182.1,448.13"/><polygon points="490.47,428.31 479.03,434.55 490.42,432.18 501.87,425.94"/><polygon points="399.11,454.09 387.67,458.17 399.06,457.96 410.5,453.88"/><polygon points="330.59,462.09 319.15,464.54 330.54,465.95 341.99,463.5"/><polygon points="307.75,462.59 296.31,464.51 307.7,466.46 319.15,464.54"/><polygon points="284.91,462.02 273.47,463.39 284.86,465.88 296.31,464.51"/><polygon points="216.39,453.81 204.94,453.57 216.34,457.68 227.79,457.93"/><polygon points="125.03,427.75 113.59,425.35 124.98,431.62 136.43,434.02"/><polygon points="479.03,434.55 467.58,440.24 478.98,437.88 490.42,432.18"/><polygon points="136.43,434.02 124.98,431.62 136.38,437.35 147.82,439.75"/><polygon points="456.19,442.07 444.74,447.23 456.14,445.4 467.58,440.24"/><polygon points="433.35,448.52 421.9,453.13 433.3,451.84 444.74,447.23"/><polygon points="364.82,461.38 353.38,464.37 364.78,464.7 376.22,461.7"/><polygon points="250.63,461.2 239.18,461.5 250.58,464.52 262.02,464.23"/><polygon points="182.1,448.13 170.66,446.81 182.06,451.46 193.5,452.78"/><polygon points="159.27,441.62 147.82,439.75 159.22,444.94 170.66,446.81"/><polygon points="410.5,453.88 399.06,457.96 410.45,457.21 421.9,453.13"/><polygon points="341.99,463.5 330.54,465.95 341.94,466.83 353.38,464.37"/><polygon points="319.15,464.54 307.7,466.46 319.1,467.87 330.54,465.95"/><polygon points="296.31,464.51 284.86,465.88 296.26,467.83 307.7,466.46"/><polygon points="273.47,463.39 262.02,464.23 273.42,466.72 284.86,465.88"/><polygon points="204.94,453.57 193.5,452.78 204.9,456.89 216.34,457.68"/><polygon points="387.67,458.17 376.22,461.7 387.62,461.49 399.06,457.96"/><polygon points="227.79,457.93 216.34,457.68 227.73,461.25 239.18,461.5"/><polygon points="467.58,440.24 456.14,445.4 467.53,443.03 478.98,437.88"/><polygon points="444.74,447.23 433.3,451.84 444.69,450.01 456.14,445.4"/><polygon points="170.66,446.81 159.22,444.94 170.61,449.59 182.06,451.46"/><polygon points="147.82,439.75 136.38,437.35 147.77,442.54 159.22,444.94"/><polygon points="421.9,453.13 410.45,457.21 421.85,455.92 433.3,451.84"/><polygon points="399.06,457.96 387.62,461.49 399.01,460.74 410.45,457.21"/><polygon points="376.22,461.7 364.78,464.7 376.17,464.49 387.62,461.49"/><polygon points="353.38,464.37 341.94,466.83 353.33,467.16 364.78,464.7"/><polygon points="330.54,465.95 319.1,467.87 330.49,468.74 341.94,466.83"/><polygon points="307.7,466.46 296.26,467.83 307.65,469.25 319.1,467.87"/><polygon points="284.86,465.88 273.42,466.72 284.81,468.67 296.26,467.83"/><polygon points="262.02,464.23 250.58,464.52 261.97,467.01 273.42,466.72"/><polygon points="239.18,461.5 227.73,461.25 239.13,464.28 250.58,464.52"/><polygon points="216.34,457.68 204.9,456.89 216.29,460.46 227.73,461.25"/><polygon points="193.5,452.78 182.06,451.46 193.45,455.57 204.9,456.89"/><polygon points="456.14,445.4 444.69,450.01 456.08,447.64 467.53,443.03"/><polygon points="159.22,444.94 147.77,442.54 159.17,447.19 170.61,449.59"/><polygon points="433.3,451.84 421.85,455.92 433.25,454.09 444.69,450.01"/><polygon points="341.94,466.83 330.49,468.74 341.89,469.07 353.33,467.16"/><polygon points="319.1,467.87 307.65,469.25 319.05,470.12 330.49,468.74"/><polygon points="296.26,467.83 284.81,468.67 296.21,470.08 307.65,469.25"/><polygon points="273.42,466.72 261.97,467.01 273.37,468.96 284.81,468.67"/><polygon points="182.06,451.46 170.61,449.59 182.01,453.7 193.45,455.57"/><polygon points="410.45,457.21 399.01,460.74 410.41,459.45 421.85,455.92"/><polygon points="387.62,461.49 376.17,464.49 387.56,463.74 399.01,460.74"/><polygon points="364.78,464.7 353.33,467.16 364.73,466.94 376.17,464.49"/><polygon points="250.58,464.52 239.13,464.28 250.53,466.77 261.97,467.01"/><polygon points="227.73,461.25 216.29,460.46 227.69,463.49 239.13,464.28"/><polygon points="204.9,456.89 193.45,455.57 204.84,459.14 216.29,460.46"/><polygon points="444.69,450.01 433.25,454.09 444.64,451.72 456.08,447.64"/><polygon points="421.85,455.92 410.41,459.45 421.8,457.62 433.25,454.09"/><polygon points="399.01,460.74 387.56,463.74 398.96,462.45 410.41,459.45"/><polygon points="330.49,468.74 319.05,470.12 330.44,470.44 341.89,469.07"/><polygon points="307.65,469.25 296.21,470.08 307.6,470.95 319.05,470.12"/><polygon points="284.81,468.67 273.37,468.96 284.76,470.37 296.21,470.08"/><polygon points="216.29,460.46 204.84,459.14 216.24,462.17 227.69,463.49"/><polygon points="193.45,455.57 182.01,453.7 193.4,457.27 204.84,459.14"/><polygon points="170.61,449.59 159.17,447.19 170.56,451.3 182.01,453.7"/><polygon points="376.17,464.49 364.73,466.94 376.12,466.19 387.56,463.74"/><polygon points="353.33,467.16 341.89,469.07 353.28,468.86 364.73,466.94"/><polygon points="261.97,467.01 250.53,466.77 261.92,468.72 273.37,468.96"/><polygon points="239.13,464.28 227.69,463.49 239.08,465.98 250.53,466.77"/><polygon points="319.05,470.12 307.6,470.95 319,471.28 330.44,470.44"/><polygon points="296.21,470.08 284.76,470.37 296.16,471.25 307.6,470.95"/><polygon points="433.25,454.09 421.8,457.62 433.19,455.25 444.64,451.72"/><polygon points="410.41,459.45 398.96,462.45 410.36,460.62 421.8,457.62"/><polygon points="387.56,463.74 376.12,466.19 387.52,464.9 398.96,462.45"/><polygon points="364.73,466.94 353.28,468.86 364.68,468.11 376.12,466.19"/><polygon points="341.89,469.07 330.44,470.44 341.84,470.24 353.28,468.86"/><polygon points="273.37,468.96 261.92,468.72 273.31,470.13 284.76,470.37"/><polygon points="250.53,466.77 239.08,465.98 250.47,467.93 261.92,468.72"/><polygon points="227.69,463.49 216.24,462.17 227.64,464.66 239.08,465.98"/><polygon points="204.84,459.14 193.4,457.27 204.8,460.3 216.24,462.17"/><polygon points="182.01,453.7 170.56,451.3 181.96,454.87 193.4,457.27"/><polygon points="421.8,457.62 410.36,460.62 421.75,458.25 433.19,455.25"/><polygon points="307.6,470.95 296.16,471.25 307.55,471.57 319,471.28"/><polygon points="193.4,457.27 181.96,454.87 193.35,457.9 204.8,460.3"/><polygon points="398.96,462.45 387.52,464.9 398.91,463.07 410.36,460.62"/><polygon points="376.12,466.19 364.68,468.11 376.07,466.82 387.52,464.9"/><polygon points="353.28,468.86 341.84,470.24 353.23,469.48 364.68,468.11"/><polygon points="330.44,470.44 319,471.28 330.39,471.07 341.84,470.24"/><polygon points="284.76,470.37 273.31,470.13 284.71,471 296.16,471.25"/><polygon points="261.92,468.72 250.47,467.93 261.87,469.34 273.31,470.13"/><polygon points="239.08,465.98 227.64,464.66 239.03,466.61 250.47,467.93"/><polygon points="216.24,462.17 204.8,460.3 216.19,462.79 227.64,464.66"/><polygon points="410.36,460.62 398.91,463.07 410.31,460.71 421.75,458.25"/><polygon points="387.52,464.9 376.07,466.82 387.47,464.99 398.91,463.07"/><polygon points="364.68,468.11 353.23,469.48 364.63,468.19 376.07,466.82"/><polygon points="341.84,470.24 330.39,471.07 341.79,470.32 353.23,469.48"/><polygon points="319,471.28 307.55,471.57 318.95,471.36 330.39,471.07"/><polygon points="296.16,471.25 284.71,471 296.11,471.33 307.55,471.57"/><polygon points="273.31,470.13 261.87,469.34 273.26,470.21 284.71,471"/><polygon points="250.47,467.93 239.03,466.61 250.43,468.02 261.87,469.34"/><polygon points="227.64,464.66 216.19,462.79 227.59,464.74 239.03,466.61"/><polygon points="204.8,460.3 193.35,457.9 204.75,460.39 216.19,462.79"/><polygon points="398.91,463.07 387.47,464.99 398.86,462.62 410.31,460.71"/><polygon points="376.07,466.82 364.63,468.19 376.02,466.36 387.47,464.99"/><polygon points="353.23,469.48 341.79,470.32 353.18,469.03 364.63,468.19"/><polygon points="330.39,471.07 318.95,471.36 330.34,470.61 341.79,470.32"/><polygon points="307.55,471.57 296.11,471.33 307.5,471.12 318.95,471.36"/><polygon points="284.71,471 273.26,470.21 284.66,470.54 296.11,471.33"/><polygon points="261.87,469.34 250.43,468.02 261.82,468.89 273.26,470.21"/><polygon points="239.03,466.61 227.59,464.74 238.98,466.15 250.43,468.02"/><polygon points="216.19,462.79 204.75,460.39 216.14,462.34 227.59,464.74"/><polygon points="387.47,464.99 376.02,466.36 387.42,464 398.86,462.62"/><polygon points="364.63,468.19 353.18,469.03 364.58,467.2 376.02,466.36"/><polygon points="341.79,470.32 330.34,470.61 341.74,469.32 353.18,469.03"/><polygon points="273.26,470.21 261.82,468.89 273.22,469.22 284.66,470.54"/><polygon points="250.43,468.02 238.98,466.15 250.38,467.02 261.82,468.89"/><polygon points="227.59,464.74 216.14,462.34 227.54,463.75 238.98,466.15"/><polygon points="318.95,471.36 307.5,471.12 318.89,470.37 330.34,470.61"/><polygon points="296.11,471.33 284.66,470.54 296.06,470.33 307.5,471.12"/><polygon points="376.02,466.36 364.58,467.2 375.97,464.83 387.42,464"/><polygon points="353.18,469.03 341.74,469.32 353.13,467.49 364.58,467.2"/><polygon points="261.82,468.89 250.38,467.02 261.77,467.35 273.22,469.22"/><polygon points="238.98,466.15 227.54,463.75 238.93,464.62 250.38,467.02"/><polygon points="330.34,470.61 318.89,470.37 330.29,469.08 341.74,469.32"/><polygon points="307.5,471.12 296.06,470.33 307.45,469.58 318.89,470.37"/><polygon points="284.66,470.54 273.22,469.22 284.61,469.01 296.06,470.33"/><polygon points="364.58,467.2 353.13,467.49 364.53,465.12 375.97,464.83"/><polygon points="341.74,469.32 330.29,469.08 341.69,467.25 353.13,467.49"/><polygon points="318.89,470.37 307.45,469.58 318.85,468.29 330.29,469.08"/><polygon points="296.06,470.33 284.61,469.01 296,468.26 307.45,469.58"/><polygon points="273.22,469.22 261.77,467.35 273.17,467.14 284.61,469.01"/><polygon points="250.38,467.02 238.93,464.62 250.33,464.95 261.77,467.35"/><polygon points="353.13,467.49 341.69,467.25 353.08,464.88 364.53,465.12"/><polygon points="330.29,469.08 318.85,468.29 330.24,466.46 341.69,467.25"/><polygon points="307.45,469.58 296,468.26 307.4,466.97 318.85,468.29"/><polygon points="284.61,469.01 273.17,467.14 284.56,466.39 296,468.26"/><polygon points="261.77,467.35 250.33,464.95 261.72,464.74 273.17,467.14"/><polygon points="341.69,467.25 330.24,466.46 341.63,464.09 353.08,464.88"/><polygon points="318.85,468.29 307.4,466.97 318.8,465.14 330.24,466.46"/><polygon points="296,468.26 284.56,466.39 295.96,465.1 307.4,466.97"/><polygon points="273.17,467.14 261.72,464.74 273.12,463.99 284.56,466.39"/><polygon points="330.24,466.46 318.8,465.14 330.19,462.77 341.63,464.09"/><polygon points="307.4,466.97 295.96,465.1 307.35,463.27 318.8,465.14"/><polygon points="284.56,466.39 273.12,463.99 284.51,462.7 295.96,465.1"/><polygon points="318.8,465.14 307.35,463.27 318.75,460.9 330.19,462.77"/><polygon points="295.96,465.1 284.51,462.7 295.91,460.87 307.35,463.27"/><polygon points="307.35,463.27 295.91,460.87 307.3,458.5 318.75,460.9"/></g>
<polyline fill="none" stroke="#000000" points="259,461.36 260.29,461.66 261.61,461.96 262.96,462.25 264.34,462.53 265.76,462.8 267.2,463.06 268.67,463.31 270.17,463.55 271.69,463.79 273.24,464.01 274.81,464.22 276.4,464.43 278.02,464.62 279.65,464.81 281.31,464.98 282.98,465.14 284.67,465.29 286.38,465.44 288.1,465.57 289.83,465.69 291.58,465.8 293.33,465.9 295.1,465.98 296.88,466.06 298.66,466.12 300.45,466.18 302.25,466.22 304.05,466.25 305.85,466.27 307.65,466.28 309.45,466.28 311.25,466.26 313.05,466.24 314.85,466.2 316.64,466.15 318.42,466.09 320.2,466.02 321.97,465.94 323.73,465.85 325.48,465.74 327.21,465.63 328.94,465.5 330.65,465.37 332.34,465.22 334.01,465.06 335.67,464.89 337.31,464.71 338.93,464.52 340.53,464.33 342.1,464.12 343.65,463.9 345.18,463.67 346.68,463.43 348.16,463.18 349.6,462.93 351.02,462.66 352.41,462.38 353.77,462.1 355.09,461.81 356.39,461.51 357.65,461.2 358.88,460.89 360.07,460.56 361.22,460.23 362.34,459.89 363.42,459.55 364.47,459.2 365.47,458.84 366.44,458.47 367.36,458.1 368.25,457.72 369.09,457.34 369.89,456.96 370.65,456.56 371.37,456.17 372.04,455.77 372.66,455.36 373.25,454.95 373.79,454.54 374.28,454.12 374.73,453.7 375.13,453.28 375.48,452.86 375.79,452.43 376.06,452 376.27,451.57 376.44,451.14 376.56,450.71 376.64,450.28 376.67,449.85 376.65,449.41 376.58,448.98 376.46,448.55 376.3,448.12 376.1,447.69 375.84,447.26 375.54,446.83 375.19,446.41 374.8,445.98 374.36,445.56 373.87,445.15 373.34,444.73 372.77,444.32 372.15,443.91 371.48,443.51 370.77,443.11 370.02,442.72 369.23,442.33 368.39,441.94 367.51,441.56 366.6,441.19 365.64,440.82 364.64,440.46 363.6,440.11 362.53,439.76 361.41,439.42 360.26,439.08 359.08,438.75 357.86,438.43 356.6,438.12 355.31,437.82 353.99,437.52 352.64,437.23 351.26,436.95 349.84,436.68 348.4,436.42 346.93,436.17 345.43,435.93 343.91,435.7 342.36,435.47 340.79,435.26 339.2,435.05 337.58,434.86 335.95,434.68 334.29,434.5 332.62,434.34 330.93,434.19 329.22,434.05 327.5,433.91 325.77,433.79 324.02,433.68 322.27,433.59 320.5,433.5 318.72,433.42 316.94,433.36 315.15,433.3 313.35,433.26 311.55,433.23 309.75,433.21 307.95,433.2 306.15,433.21 304.35,433.22 302.55,433.25 300.75,433.28 298.96,433.33 297.18,433.39 295.4,433.46 293.63,433.54 291.87,433.64 290.12,433.74 288.39,433.85 286.66,433.98 284.95,434.12 283.26,434.26 281.59,434.42 279.93,434.59 278.29,434.77 276.67,434.96 275.07,435.16 273.5,435.37 271.95,435.58 270.42,435.81 268.92,436.05 267.44,436.3 266,436.56 264.58,436.82 263.19,437.1 261.83,437.38 260.51,437.67 259.21,437.97 257.95,438.28 256.72,438.6 255.53,438.92 254.38,439.25 253.26,439.59 252.18,439.93 251.13,440.29 250.13,440.65 249.16,441.01 248.24,441.38 247.35,441.76 246.51,442.14 245.71,442.53 244.95,442.92 244.23,443.31 243.56,443.72 242.94,444.12 242.35,444.53 241.81,444.94 241.32,445.36 240.87,445.78 240.47,446.2 240.12,446.62 239.81,447.05 239.54,447.48 239.33,447.91 239.16,448.34 239.04,448.77 238.96,449.2 238.93,449.64 238.95,450.07 239.02,450.5 239.14,450.93 239.3,451.36 239.5,451.79 239.76,452.22 240.06,452.65 240.41,453.08 240.8,453.5 241.24,453.92 241.73,454.34 242.26,454.75 242.83,455.16 243.45,455.57 244.12,455.97 244.83,456.37 245.58,456.77 246.37,457.15 247.21,457.54 248.09,457.92 249,458.29 249.96,458.66 250.96,459.02 252,459.38 253.07,459.72 254.19,460.07 255.34,460.4 256.52,460.73 257.74,461.05 259,461.36 259,461.36"/><polyline fill="none" stroke="#0000ff" points="238.78,461.26 240.61,461.69 242.47,462.11 244.39,462.52 246.34,462.91 248.34,463.3 250.38,463.67 252.46,464.02 254.58,464.37 256.73,464.7 258.92,465.01 261.14,465.31 263.4,465.6 265.68,465.88 267.99,466.14 270.33,466.38 272.7,466.61 275.09,466.83 277.5,467.03 279.94,467.21 282.39,467.38 284.86,467.54 287.34,467.68 289.84,467.8 292.35,467.91 294.88,468 297.41,468.08 299.95,468.14 302.49,468.18 305.04,468.21 307.59,468.22 310.14,468.22 312.68,468.2 315.23,468.16 317.77,468.11 320.3,468.04 322.82,467.96 325.34,467.86 327.84,467.74 330.33,467.61 332.8,467.46 335.26,467.3 337.69,467.12 340.11,466.93 342.5,466.72 344.87,466.5 347.22,466.26 349.54,466.01 351.82,465.74 354.08,465.46 356.31,465.16 358.5,464.85 360.66,464.53 362.79,464.19 364.87,463.84 366.92,463.48 368.92,463.1 370.89,462.71 372.81,462.31 374.68,461.9 376.51,461.48 378.3,461.04 380.03,460.59 381.72,460.13 383.35,459.67 384.93,459.19 386.46,458.7 387.94,458.2 389.36,457.7 390.73,457.18 392.04,456.66 393.29,456.12 394.48,455.58 395.61,455.04 396.68,454.48 397.7,453.92 398.65,453.35 399.53,452.78 400.36,452.2 401.12,451.62 401.82,451.03 402.45,450.44 403.02,449.84 403.52,449.24 403.96,448.64 404.33,448.03 404.63,447.42 404.87,446.82 405.05,446.2 405.15,445.59 405.19,444.98 405.16,444.37 405.07,443.76 404.91,443.15 404.68,442.54 404.38,441.93 404.02,441.32 403.6,440.72 403.11,440.12 402.55,439.52 401.93,438.92 401.24,438.33 400.49,437.75 399.68,437.17 398.8,436.59 397.86,436.02 396.86,435.46 395.79,434.9 394.67,434.35 393.49,433.8 392.25,433.27 390.95,432.74 389.59,432.22 388.18,431.71 386.72,431.21 385.19,430.71 383.62,430.23 381.99,429.76 380.32,429.29 378.59,428.84 376.82,428.4 374.99,427.97 373.13,427.55 371.21,427.14 369.26,426.75 367.26,426.37 365.22,426 363.14,425.64 361.02,425.3 358.87,424.97 356.68,424.65 354.46,424.35 352.2,424.06 349.92,423.79 347.61,423.53 345.27,423.28 342.9,423.05 340.51,422.84 338.1,422.63 335.66,422.45 333.21,422.28 330.74,422.12 328.26,421.99 325.76,421.86 323.25,421.75 320.72,421.66 318.19,421.59 315.65,421.53 313.11,421.48 310.56,421.46 308.01,421.44 305.46,421.45 302.92,421.47 300.37,421.5 297.83,421.56 295.3,421.62 292.78,421.71 290.26,421.81 287.76,421.92 285.27,422.06 282.8,422.2 280.34,422.36 277.91,422.54 275.49,422.74 273.1,422.94 270.73,423.17 268.38,423.41 266.06,423.66 263.78,423.93 261.52,424.21 259.29,424.5 257.1,424.81 254.94,425.14 252.81,425.47 250.73,425.82 248.68,426.19 246.68,426.56 244.71,426.95 242.79,427.35 240.92,427.76 239.09,428.19 237.3,428.62 235.57,429.07 233.88,429.53 232.25,430 230.67,430.48 229.14,430.96 227.66,431.46 226.24,431.97 224.87,432.48 223.56,433.01 222.31,433.54 221.12,434.08 219.99,434.63 218.92,435.18 217.9,435.74 216.95,436.31 216.07,436.88 215.24,437.46 214.48,438.05 213.78,438.63 213.15,439.23 212.58,439.82 212.08,440.42 211.64,441.03 211.27,441.63 210.97,442.24 210.73,442.85 210.55,443.46 210.45,444.07 210.41,444.68 210.44,445.29 210.53,445.91 210.69,446.52 210.92,447.13 211.22,447.74 211.58,448.34 212,448.95 212.49,449.55 213.05,450.15 213.67,450.74 214.36,451.33 215.11,451.92 215.92,452.5 216.8,453.07 217.74,453.64 218.74,454.21 219.81,454.77 220.93,455.32 222.11,455.86 223.35,456.4 224.65,456.92 226.01,457.44 227.42,457.96 228.88,458.46 230.41,458.95 231.98,459.43 233.61,459.91 235.28,460.37 237.01,460.82 238.78,461.26 238.78,461.26"/><polyline fill="none" stroke="#00ff00" points="223.27,460.05 225.51,460.57 227.79,461.09 230.14,461.59 232.53,462.07 234.98,462.54 237.48,462.99 240.02,463.43 242.62,463.85 245.25,464.25 247.93,464.64 250.66,465.01 253.42,465.36 256.21,465.7 259.05,466.02 261.91,466.32 264.81,466.6 267.74,466.86 270.69,467.11 273.67,467.34 276.68,467.54 279.7,467.73 282.75,467.9 285.81,468.05 288.88,468.19 291.97,468.3 295.07,468.39 298.18,468.46 301.3,468.52 304.42,468.55 307.54,468.57 310.66,468.56 313.78,468.54 316.9,468.49 320.01,468.43 323.11,468.35 326.2,468.24 329.28,468.12 332.34,467.98 335.39,467.82 338.42,467.64 341.43,467.44 344.41,467.22 347.37,466.99 350.3,466.73 353.2,466.46 356.08,466.17 358.91,465.86 361.72,465.53 364.49,465.18 367.21,464.82 369.9,464.44 372.54,464.05 375.14,463.63 377.7,463.2 380.2,462.76 382.66,462.3 385.07,461.82 387.42,461.33 389.72,460.83 391.96,460.31 394.14,459.77 396.27,459.23 398.33,458.66 400.33,458.09 402.27,457.51 404.14,456.91 405.95,456.3 407.69,455.68 409.36,455.05 410.97,454.4 412.5,453.75 413.96,453.09 415.35,452.42 416.66,451.74 417.9,451.05 419.06,450.36 420.15,449.66 421.16,448.95 422.09,448.23 422.95,447.51 423.72,446.79 424.42,446.06 425.03,445.32 425.57,444.58 426.02,443.84 426.4,443.1 426.69,442.35 426.9,441.6 427.03,440.86 427.08,440.11 427.04,439.36 426.93,438.61 426.73,437.86 426.45,437.11 426.09,436.37 425.65,435.62 425.13,434.88 424.53,434.15 423.84,433.41 423.08,432.69 422.24,431.96 421.32,431.24 420.32,430.53 419.25,429.83 418.1,429.13 416.87,428.44 415.57,427.76 414.2,427.08 412.75,426.42 411.23,425.76 409.64,425.11 407.98,424.48 406.25,423.85 404.45,423.23 402.59,422.63 400.66,422.04 398.67,421.46 396.62,420.89 394.5,420.34 392.33,419.8 390.09,419.27 387.81,418.76 385.46,418.26 383.07,417.78 380.62,417.31 378.12,416.86 375.58,416.42 372.98,416 370.35,415.59 367.67,415.21 364.94,414.84 362.18,414.48 359.39,414.15 356.55,413.83 353.69,413.53 350.79,413.25 347.86,412.98 344.91,412.74 341.93,412.51 338.92,412.3 335.9,412.11 332.85,411.94 329.79,411.79 326.72,411.66 323.63,411.55 320.53,411.45 317.42,411.38 314.3,411.33 311.18,411.29 308.06,411.28 304.94,411.28 301.82,411.31 298.7,411.35 295.59,411.42 292.49,411.5 289.4,411.6 286.32,411.72 283.26,411.87 280.21,412.03 277.18,412.21 274.17,412.41 271.19,412.62 268.23,412.86 265.3,413.12 262.4,413.39 259.52,413.68 256.69,413.99 253.88,414.32 251.11,414.66 248.39,415.02 245.7,415.4 243.06,415.8 240.46,416.21 237.9,416.64 235.4,417.09 232.94,417.55 230.53,418.02 228.18,418.51 225.88,419.02 223.64,419.54 221.46,420.07 219.33,420.62 217.27,421.18 215.27,421.75 213.33,422.34 211.46,422.94 209.65,423.55 207.91,424.17 206.24,424.8 204.63,425.44 203.1,426.09 201.64,426.76 200.25,427.43 198.94,428.1 197.7,428.79 196.54,429.49 195.45,430.19 194.44,430.9 193.51,431.61 192.65,432.33 191.88,433.06 191.18,433.79 190.57,434.52 190.03,435.26 189.58,436 189.2,436.75 188.91,437.49 188.7,438.24 188.57,438.99 188.52,439.74 188.56,440.49 188.67,441.24 188.87,441.99 189.15,442.74 189.51,443.48 189.95,444.22 190.47,444.96 191.07,445.7 191.76,446.43 192.52,447.16 193.36,447.88 194.28,448.6 195.28,449.31 196.35,450.02 197.5,450.72 198.73,451.41 200.03,452.09 201.4,452.76 202.85,453.43 204.37,454.09 205.96,454.73 207.62,455.37 209.35,456 211.15,456.61 213.01,457.22 214.94,457.81 216.93,458.39 218.98,458.95 221.1,459.51 223.27,460.05 223.27,460.05"/><polyline fill="none" stroke="#00ffff" points="210.2,458.25 212.77,458.86 215.42,459.45 218.12,460.03 220.89,460.59 223.72,461.13 226.6,461.65 229.54,462.15 232.53,462.64 235.58,463.11 238.67,463.55 241.82,463.98 245,464.39 248.23,464.78 251.5,465.14 254.81,465.49 258.16,465.82 261.54,466.12 264.95,466.41 268.39,466.67 271.86,466.91 275.35,467.13 278.87,467.32 282.4,467.5 285.96,467.65 289.52,467.78 293.1,467.89 296.69,467.97 300.29,468.03 303.89,468.07 307.5,468.09 311.1,468.08 314.71,468.06 318.31,468 321.9,467.93 325.48,467.83 329.05,467.72 332.6,467.57 336.14,467.41 339.66,467.22 343.16,467.02 346.63,466.79 350.07,466.54 353.49,466.26 356.88,465.97 360.23,465.65 363.54,465.32 366.82,464.96 370.06,464.58 373.25,464.18 376.4,463.76 379.51,463.33 382.56,462.87 385.56,462.39 388.51,461.9 391.41,461.38 394.24,460.85 397.02,460.3 399.74,459.73 402.39,459.15 404.98,458.55 407.5,457.93 409.95,457.3 412.34,456.66 414.65,455.99 416.89,455.32 419.05,454.63 421.14,453.92 423.15,453.21 425.08,452.48 426.93,451.73 428.7,450.98 430.38,450.22 431.98,449.44 433.5,448.66 434.93,447.87 436.27,447.06 437.53,446.25 438.7,445.44 439.77,444.61 440.76,443.78 441.65,442.94 442.46,442.1 443.17,441.25 443.79,440.4 444.31,439.54 444.74,438.68 445.08,437.82 445.33,436.96 445.48,436.09 445.53,435.22 445.49,434.36 445.36,433.49 445.13,432.63 444.81,431.77 444.39,430.91 443.88,430.05 443.28,429.19 442.58,428.34 441.8,427.5 440.92,426.66 439.94,425.82 438.88,424.99 437.73,424.17 436.49,423.36 435.16,422.55 433.75,421.75 432.24,420.96 430.66,420.19 428.98,419.42 427.23,418.66 425.39,417.91 423.47,417.18 421.48,416.45 419.4,415.74 417.25,415.05 415.03,414.36 412.73,413.69 410.36,413.04 407.91,412.4 405.4,411.77 402.83,411.17 400.18,410.57 397.48,410 394.71,409.44 391.88,408.9 389,408.38 386.06,407.87 383.07,407.39 380.02,406.92 376.93,406.47 373.78,406.05 370.6,405.64 367.37,405.25 364.1,404.88 360.79,404.54 357.44,404.21 354.06,403.91 350.65,403.62 347.21,403.36 343.74,403.12 340.25,402.9 336.73,402.7 333.2,402.53 329.64,402.38 326.08,402.25 322.5,402.14 318.91,402.06 315.31,401.99 311.71,401.95 308.1,401.94 304.5,401.94 300.89,401.97 297.29,402.02 293.7,402.1 290.12,402.19 286.55,402.31 283,402.45 279.46,402.62 275.94,402.8 272.44,403.01 268.97,403.24 265.53,403.49 262.11,403.76 258.72,404.06 255.37,404.37 252.06,404.71 248.78,405.07 245.54,405.45 242.35,405.85 239.2,406.26 236.09,406.7 233.04,407.16 230.04,407.64 227.09,408.13 224.19,408.64 221.36,409.18 218.58,409.73 215.86,410.29 213.21,410.88 210.62,411.48 208.1,412.09 205.65,412.72 203.26,413.37 200.95,414.03 198.71,414.71 196.55,415.4 194.46,416.11 192.45,416.82 190.52,417.55 188.67,418.29 186.9,419.05 185.22,419.81 183.62,420.58 182.1,421.37 180.67,422.16 179.33,422.96 178.07,423.77 176.9,424.59 175.83,425.42 174.84,426.25 173.95,427.09 173.14,427.93 172.43,428.78 171.81,429.63 171.29,430.49 170.86,431.35 170.52,432.21 170.27,433.07 170.12,433.94 170.07,434.8 170.11,435.67 170.24,436.53 170.47,437.4 170.79,438.26 171.21,439.12 171.72,439.98 172.32,440.83 173.02,441.68 173.8,442.53 174.68,443.37 175.66,444.21 176.72,445.03 177.87,445.86 179.11,446.67 180.44,447.48 181.85,448.27 183.36,449.06 184.94,449.84 186.62,450.61 188.37,451.37 190.21,452.12 192.13,452.85 194.12,453.57 196.2,454.28 198.35,454.98 200.57,455.66 202.87,456.33 205.24,456.99 207.69,457.63 210.2,458.25 210.2,458.25"/><polyline fill="none" stroke="#ff0000" points="198.68,456.09 201.56,456.77 204.51,457.43 207.54,458.07 210.63,458.69 213.79,459.3 217.02,459.88 220.3,460.45 223.65,460.99 227.05,461.51 230.51,462.01 234.03,462.49 237.59,462.95 241.2,463.38 244.86,463.79 248.56,464.18 252.3,464.54 256.08,464.88 259.89,465.2 263.74,465.49 267.62,465.76 271.52,466.01 275.45,466.23 279.41,466.42 283.38,466.59 287.37,466.74 291.37,466.86 295.38,466.95 299.4,467.02 303.43,467.07 307.46,467.08 311.49,467.08 315.52,467.05 319.55,466.99 323.56,466.91 327.57,466.8 331.56,466.67 335.53,466.51 339.49,466.33 343.42,466.12 347.33,465.89 351.21,465.63 355.06,465.35 358.88,465.04 362.67,464.71 366.42,464.36 370.12,463.98 373.79,463.58 377.41,463.16 380.98,462.72 384.5,462.25 387.97,461.76 391.38,461.25 394.74,460.71 398.04,460.16 401.27,459.59 404.45,458.99 407.55,458.38 410.59,457.74 413.55,457.09 416.45,456.42 419.27,455.73 422.01,455.02 424.67,454.3 427.26,453.56 429.76,452.8 432.18,452.03 434.51,451.24 436.76,450.44 438.92,449.63 440.99,448.8 442.97,447.96 444.85,447.1 446.64,446.24 448.34,445.36 449.94,444.47 451.44,443.58 452.84,442.67 454.15,441.76 455.35,440.83 456.45,439.9 457.45,438.97 458.35,438.02 459.15,437.08 459.84,436.12 460.43,435.17 460.91,434.2 461.29,433.24 461.56,432.28 461.73,431.31 461.79,430.34 461.74,429.37 461.59,428.4 461.34,427.44 460.98,426.47 460.51,425.51 459.94,424.55 459.27,423.6 458.49,422.65 457.61,421.7 456.63,420.76 455.54,419.83 454.35,418.9 453.07,417.98 451.68,417.07 450.19,416.17 448.61,415.28 446.93,414.4 445.16,413.53 443.29,412.67 441.33,411.82 439.27,410.98 437.13,410.16 434.9,409.35 432.58,408.56 430.17,407.78 427.68,407.02 425.11,406.27 422.46,405.54 419.73,404.82 416.92,404.12 414.04,403.44 411.09,402.78 408.06,402.14 404.97,401.51 401.81,400.91 398.58,400.33 395.3,399.76 391.95,399.22 388.55,398.7 385.09,398.2 381.57,397.72 378.01,397.26 374.4,396.83 370.74,396.42 367.04,396.03 363.3,395.67 359.52,395.32 355.71,395.01 351.86,394.71 347.98,394.45 344.08,394.2 340.15,393.98 336.19,393.79 332.22,393.62 328.23,393.47 324.23,393.35 320.22,393.26 316.2,393.19 312.17,393.14 308.14,393.12 304.11,393.13 300.08,393.16 296.05,393.22 292.04,393.3 288.03,393.41 284.04,393.54 280.07,393.7 276.11,393.88 272.18,394.09 268.27,394.32 264.39,394.58 260.54,394.86 256.72,395.17 252.93,395.5 249.18,395.85 245.48,396.23 241.81,396.63 238.19,397.05 234.62,397.49 231.1,397.96 227.63,398.45 224.22,398.96 220.86,399.49 217.56,400.05 214.33,400.62 211.15,401.22 208.05,401.83 205.01,402.47 202.05,403.12 199.15,403.79 196.33,404.48 193.59,405.18 190.93,405.91 188.34,406.65 185.84,407.41 183.42,408.18 181.09,408.96 178.84,409.77 176.68,410.58 174.61,411.41 172.63,412.25 170.75,413.11 168.96,413.97 167.26,414.85 165.66,415.73 164.16,416.63 162.76,417.54 161.45,418.45 160.25,419.38 159.15,420.31 158.15,421.24 157.25,422.19 156.45,423.13 155.76,424.09 155.17,425.04 154.69,426 154.31,426.97 154.04,427.93 153.87,428.9 153.81,429.87 153.86,430.84 154.01,431.8 154.26,432.77 154.62,433.74 155.09,434.7 155.66,435.66 156.33,436.61 157.11,437.56 157.99,438.51 158.97,439.45 160.06,440.38 161.25,441.31 162.53,442.23 163.92,443.14 165.41,444.04 166.99,444.93 168.67,445.81 170.44,446.68 172.31,447.54 174.27,448.39 176.33,449.23 178.47,450.05 180.7,450.86 183.02,451.65 185.43,452.43 187.92,453.19 190.49,453.94 193.14,454.67 195.87,455.39 198.68,456.09 198.68,456.09"/><polyline fill="none" stroke="#ff00ff" points="228.28,460.84 232.2,461.33 236.18,461.8 240.2,462.24 244.27,462.66 248.38,463.05 252.53,463.41 256.72,463.75 260.95,464.06 265.21,464.35 269.49,464.61 273.81,464.84 278.14,465.04 282.5,465.22 286.88,465.37 291.26,465.49 295.66,465.59 300.07,465.66 304.49,465.69 308.9,465.71 313.32,465.69 317.73,465.65 322.13,465.57 326.53,465.47 330.91,465.35 335.28,465.19 339.62,465.01 343.95,464.8 348.25,464.56 352.52,464.3 356.77,464.01 360.97,463.69 365.15,463.35 369.28,462.98 373.37,462.59 377.42,462.16 381.41,461.72 385.36,461.25 386.67,461.08"/><polyline fill="none" stroke="#ff00ff" points="456.57,444.44 458.6,443.5 460.52,442.55 462.35,441.59 464.06,440.61 465.67,439.62 467.17,438.63 468.57,437.62 469.85,436.61 471.02,435.59 472.08,434.56 473.02,433.53 473.86,432.48 474.58,431.44 475.18,430.39 475.67,429.34 476.05,428.28 476.31,427.22 476.45,426.16 476.48,425.1 476.39,424.04 476.19,422.98 475.87,421.92 475.44,420.87 474.89,419.81 474.23,418.76 473.46,417.72 472.57,416.68 471.56,415.65 470.45,414.62 469.22,413.6 467.88,412.59 466.44,411.58 464.88,410.59 463.22,409.61 461.45,408.63 459.57,407.67 457.6,406.72 456.91,406.41"/><polyline fill="none" stroke="#ff00ff" points="387.32,389.55 383.4,389.06 379.42,388.59 375.4,388.15 371.33,387.73 367.22,387.34 363.07,386.98 358.88,386.64 354.65,386.33 350.39,386.04 346.11,385.78 341.79,385.55 337.46,385.35 333.1,385.17 328.72,385.02 324.34,384.9 319.94,384.8 315.53,384.74 311.11,384.7 306.7,384.69 302.28,384.7 297.87,384.75 293.47,384.82 289.07,384.92 284.69,385.04 280.32,385.2 275.98,385.38 271.65,385.59 267.35,385.83 263.08,386.09 258.83,386.38 254.63,386.7 250.45,387.04 246.32,387.41 242.23,387.81 238.18,388.23 234.19,388.67 230.24,389.14 228.93,389.31"/><polyline fill="none" stroke="#ff00ff" points="159.03,405.95 157,406.89 155.08,407.84 153.25,408.81 151.54,409.78 149.93,410.77 148.43,411.76 147.03,412.77 145.75,413.78 144.58,414.8 143.52,415.83 142.58,416.87 141.74,417.91 141.02,418.95 140.42,420 139.93,421.06 139.55,422.11 139.29,423.17 139.15,424.23 139.12,425.29 139.21,426.35 139.41,427.41 139.73,428.47 140.16,429.52 140.71,430.58 141.37,431.63 142.14,432.67 143.03,433.71 144.04,434.74 145.15,435.77 146.38,436.79 147.72,437.8 149.16,438.81 150.72,439.8 152.38,440.79 154.15,441.76 156.03,442.72 158,443.67 158.69,443.99"/><polyline fill="none" stroke="#ffff00" points="254.15,462.05 258.72,462.38 263.33,462.67 267.98,462.94 272.64,463.18 277.33,463.4 282.05,463.58 286.78,463.73 291.52,463.85 296.28,463.94 301.04,464.01 305.81,464.04 310.58,464.04 315.35,464.01 320.11,463.95 324.87,463.87 329.61,463.75 334.34,463.6 339.05,463.43 343.73,463.22 348.4,462.98 353.03,462.72 357.64,462.42 360.69,462.21"/><polyline fill="none" stroke="#ffff00" points="481.92,433.35 483.27,432.25 484.49,431.14 485.59,430.03 486.58,428.91 487.44,427.78 488.17,426.65 488.78,425.52 489.27,424.38 489.64,423.24 489.88,422.09 489.99,420.95 489.98,419.8 489.84,418.66 489.58,417.51 489.2,416.37 488.69,415.23 488.06,414.1 487.3,412.96 486.42,411.84 485.42,410.72 484.3,409.6 483.05,408.49 482.16,407.76"/><polyline fill="none" stroke="#ffff00" points="361.45,378.52 356.88,378.2 352.27,377.9 347.62,377.63 342.96,377.39 338.27,377.18 333.55,377 328.82,376.84 324.08,376.72 319.32,376.63 314.56,376.57 309.79,376.54 305.02,376.53 300.25,376.56 295.49,376.62 290.73,376.71 285.99,376.82 281.26,376.97 276.55,377.15 271.87,377.35 267.2,377.59 262.57,377.85 257.96,378.15 254.91,378.36"/><polyline fill="none" stroke="#ffff00" points="133.68,407.23 132.33,408.32 131.11,409.43 130.01,410.54 129.02,411.66 128.16,412.79 127.43,413.92 126.82,415.06 126.33,416.19 125.96,417.34 125.72,418.48 125.61,419.63 125.62,420.77 125.76,421.92 126.02,423.06 126.4,424.2 126.91,425.34 127.54,426.48 128.3,427.61 129.18,428.74 130.18,429.86 131.3,430.97 132.55,432.08 133.44,432.81"/><polyline fill="none" stroke="#ffffff" points="270.22,461.24 275.23,461.46 280.27,461.66 285.33,461.82 290.4,461.95 295.48,462.05 300.58,462.11 305.67,462.15 310.77,462.15 315.87,462.12 320.96,462.06 326.04,461.97 331.11,461.84 336.17,461.68 341.2,461.49 344.55,461.35"/><polyline fill="none" stroke="#ffffff" points="498.92,424.6 499.84,423.39 500.63,422.18 501.28,420.97 501.8,419.75 502.19,418.53 502.45,417.31 502.57,416.08 502.56,414.86 502.41,413.64 502.14,412.41 501.72,411.19 501.18,409.97 500.5,408.76 499.7,407.55 499.08,406.74"/><polyline fill="none" stroke="#ffffff" points="345.38,369.52 340.37,369.29 335.33,369.1 330.27,368.94 325.2,368.81 320.12,368.71 315.02,368.64 309.93,368.61 304.83,368.6 299.73,368.63 294.64,368.69 289.56,368.79 284.49,368.91 279.43,369.07 274.4,369.26 271.05,369.4"/><polyline fill="none" stroke="#ffffff" points="116.68,406.16 115.76,407.36 114.97,408.57 114.32,409.79 113.8,411 113.41,412.22 113.15,413.45 113.03,414.67 113.04,415.9 113.19,417.12 113.46,418.34 113.88,419.56 114.42,420.78 115.1,422 115.9,423.21 116.52,424.01"/><polyline fill="none" stroke="#00008f" points="285.76,459.78 291.14,459.9 296.54,460 301.94,460.06 307.35,460.08 312.76,460.07 318.16,460.03 323.56,459.95 328.95,459.84 328.95,459.84"/><polyline fill="none" stroke="#00008f" points="513.22,415.97 513.72,414.68 514.09,413.38 514.31,412.08 514.4,410.78 514.34,409.49 514.14,408.19 513.79,406.89 513.31,405.6 513.31,405.6"/><polyline fill="none" stroke="#00008f" points="329.84,361.16 324.46,361.03 319.06,360.94 313.66,360.88 308.25,360.85 302.84,360.86 297.44,360.91 292.04,360.98 286.65,361.09 286.65,361.09"/><polyline fill="none" stroke="#00008f" points="102.38,404.97 101.88,406.26 101.51,407.56 101.29,408.85 101.2,410.15 101.26,411.45 101.46,412.75 101.81,414.05 102.29,415.34 102.29,415.34"/><polyline fill="none" stroke="#0000b0" points="297.82,457.79 303.52,457.84 309.22,457.86 314.92,457.84 316.82,457.82"/><polyline fill="none" stroke="#0000b0" points="525.34,408.17 525.53,406.81 525.57,405.44 525.45,404.07 525.38,403.61"/><polyline fill="none" stroke="#0000b0" points="317.78,353.33 312.08,353.28 306.38,353.26 300.68,353.28 298.78,353.3"/><polyline fill="none" stroke="#0000b0" points="90.26,402.94 90.07,404.31 90.03,405.68 90.15,407.05 90.22,407.51"/>
<g stroke="#000" fill="none"><path d="M79.4 457.3L73.6 458.7"/><path d="M536.2 458.0L542.0 459.4"/><path d="M90.8 460.1L87.9 460.8"/><path d="M524.8 460.7L527.7 461.4"/><path d="M102.2 462.8L96.4 464.2"/><path d="M513.3 463.4L519.1 464.9"/><path d="M113.6 465.6L110.7 466.3"/><path d="M501.9 466.2L504.8 466.9"/><path d="M125.0 468.3L119.1 469.7"/><path d="M490.4 468.9L496.3 470.3"/><path d="M136.4 471.1L133.5 471.8"/><path d="M479.0 471.6L481.9 472.3"/><path d="M147.8 473.9L141.9 475.3"/><path d="M467.5 474.4L473.4 475.8"/><path d="M159.2 476.6L156.2 477.3"/><path d="M456.1 477.1L459.0 477.8"/><path d="M170.6 479.4L164.7 480.8"/><path d="M444.6 479.8L450.5 481.2"/><path d="M182.0 482.1L179.0 482.8"/><path d="M433.2 482.5L436.1 483.2"/><path d="M193.4 484.9L187.5 486.3"/><path d="M421.8 485.2L427.6 486.7"/><path d="M204.7 487.7L201.8 488.4"/><path d="M410.3 488.0L413.2 488.7"/><path d="M216.1 490.4L210.3 491.8"/><path d="M398.9 490.7L404.7 492.1"/><path d="M227.5 493.2L224.6 493.9"/><path d="M387.4 493.4L390.3 494.1"/><path d="M238.9 495.9L233.1 497.3"/><path d="M376.0 496.1L381.8 497.6"/><path d="M250.3 498.7L247.4 499.4"/><path d="M364.5 498.9L367.4 499.6"/><path d="M261.7 501.5L255.9 502.9"/><path d="M353.1 501.6L358.9 503.0"/><path d="M273.1 504.2L270.2 504.9"/><path d="M341.6 504.3L344.6 505.0"/><path d="M284.5 507.0L278.7 508.4"/><path d="M330.2 507.1L336.0 508.5"/><path d="M295.9 509.7L293.0 510.4"/><path d="M318.7 509.8L321.7 510.5"/><path d="M307.3 512.5L301.5 513.9"/><path d="M307.3 512.5L313.1 513.9"/><path d="M79.4 457.3L73.6 455.9"/><path d="M79.4 443.8L73.6 442.4"/><path d="M79.4 430.3L73.6 428.9"/><path d="M79.4 416.8L73.6 415.4"/><path d="M79.4 403.3L73.6 401.9"/></g>
<text x="83.4" y="471.5" text-anchor="middle">-0.8</text><text x="106.8" y="476.3" text-anchor="middle">-0.6</text><text x="130.2" y="482.2" text-anchor="middle">-0.4</text><text x="152.8" y="488.0" text-anchor="middle">-0.2</text><text x="182.0" y="491.8" text-anchor="middle">0</text><text x="200.3" y="499.0" text-anchor="middle">0.2</text><text x="223.4" y="504.0" text-anchor="middle">0.4</text><text x="246.0" y="509.0" text-anchor="middle">0.6</text><text x="267.8" y="514.5" text-anchor="middle">0.8</text><text x="296.8" y="519.8" text-anchor="middle">1</text><text x="550.0" y="464.6" text-anchor="middle">-1</text><text x="497.5" y="480.0" text-anchor="middle">-0.5</text><text x="434.7" y="492.3" text-anchor="middle">0</text><text x="381.8" y="507.0" text-anchor="middle">0.5</text><text x="319.8" y="519.8" text-anchor="middle">1</text><text x="69.8" y="404.0" text-anchor="end">2</text><text x="69.8" y="416.8" text-anchor="end">1.5</text><text x="69.8" y="431.0" text-anchor="end">1</text><text x="69.8" y="444.0" text-anchor="end">0.5</text><text x="69.8" y="458.6" text-anchor="end">0</text><text x="70.5" y="464.7" text-anchor="end">-1</text><text x="156" y="496.8" text-anchor="middle">Y</text><text x="459.7" y="497" text-anchor="middle">X</text><text x="46" y="428.2" text-anchor="middle">Z</text>
</g>
</svg>

<div class="a menu"><div class="in">
<div class="it dis">Copy</div>
<div class="it dis">Cut</div>
<div class="it dis">Paste</div>
<div class="it">Copy Style</div>
<div class="it dis">Paste Style</div>
<div class="sep"></div>
<div class="it dis">Delete</div>
<div class="it hl">Clear</div>
<div class="it dis">Undo</div>
<div class="it dis">Redo</div>
<div class="sep"></div>
<div class="it dis">Hide</div>
<div class="it">Unhide all</div>
<div class="sep"></div>
<div class="it">Copy to Clipboard</div>
<div class="sep"></div>
<div class="it">Label<span class="arr"></span></div>
<div class="it dis">Legend<span class="arr" style="border-left-color:#000"></span></div>
<div class="it dis">Edit curve data</div>
<div class="sep"></div>
<div class="it" style="letter-spacing:-0.25px">Open Quick Editor</div>
</div></div>

<div class="a" style="left:303px;top:283px;width:88px;height:16px;border:1px solid #000;background:#ffffe1;padding-left:2px;line-height:15px;white-space:nowrap">Clears the figure</div>
</body></html>
